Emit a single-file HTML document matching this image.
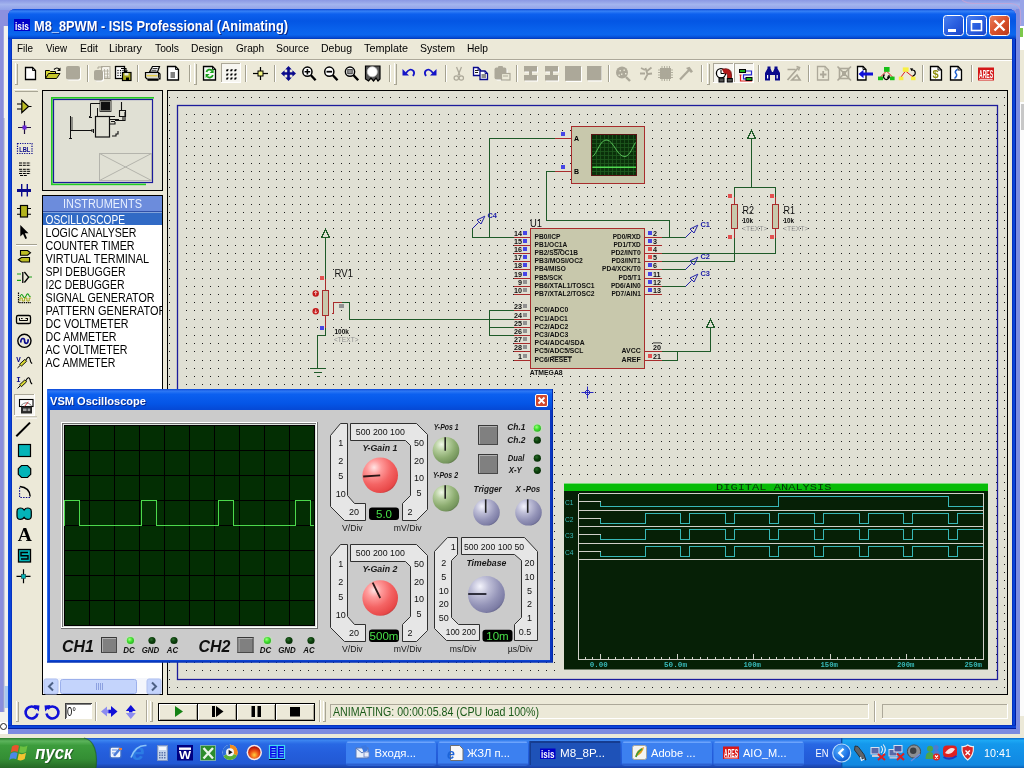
<!DOCTYPE html>
<html lang="en"><head><meta charset="utf-8"><title>M8_8PWM - ISIS Professional (Animating)</title>
<style>
html,body{margin:0;padding:0;background:#ECE9D8;overflow:hidden}
svg{display:block;font-family:'Liberation Sans',sans-serif;will-change:transform}
text{white-space:pre}
</style></head><body>
<svg width="1024" height="768" viewBox="0 0 1024 768">
<defs>
<linearGradient id="gTitle" x1="0" y1="0" x2="0" y2="1">
<stop offset="0" stop-color="#0A45D6"/><stop offset="0.07" stop-color="#3580F6"/><stop offset="0.17" stop-color="#0D60EE"/>
<stop offset="0.4" stop-color="#0456E4"/><stop offset="0.7" stop-color="#0962EC"/><stop offset="0.86" stop-color="#0B66EE"/><stop offset="0.94" stop-color="#0650D8"/><stop offset="1" stop-color="#0338B8"/>
</linearGradient>
<linearGradient id="gBtnB" x1="0" y1="0" x2="1" y2="1">
<stop offset="0" stop-color="#4C82F0"/><stop offset="0.5" stop-color="#2A5FE0"/><stop offset="1" stop-color="#1B44C8"/>
</linearGradient>
<linearGradient id="gBtnR" x1="0" y1="0" x2="1" y2="1">
<stop offset="0" stop-color="#E9825F"/><stop offset="0.5" stop-color="#D9512B"/><stop offset="1" stop-color="#B8381A"/>
</linearGradient>
<linearGradient id="gBack" x1="0" y1="0" x2="0" y2="1">
<stop offset="0" stop-color="#8A98E4"/><stop offset="0.45" stop-color="#A3B4EE"/><stop offset="1" stop-color="#8FA0E8"/>
</linearGradient>
</defs>
<rect x="0" y="0" width="1024" height="768" fill="#8C90DE"/>
<rect x="0" y="0" width="1024" height="10" fill="url(#gBack)"/>
<rect x="3.5" y="26" width="4.5" height="704" fill="#F2F2EE"/>
<rect x="0" y="26" width="3.5" height="686" fill="#8A8EDC"/>
<rect x="0" y="712" width="4" height="18" fill="#F2F2EE"/>
<rect x="3.4" y="118" width="1" height="594" fill="#9098C8"/>
<rect x="4.5" y="686" width="3.5" height="22" fill="#A8C8F0"/>
<rect x="1016" y="9" width="4" height="725" fill="#7C8CE2"/>
<rect x="1020" y="0" width="4" height="26" fill="#98A4E8"/>
<rect x="1020" y="26" width="4" height="24" fill="#FFFFFF"/>
<rect x="1020" y="28" width="3" height="9" fill="#7CC84C"/>
<rect x="1020" y="50" width="4" height="52" fill="#ECE9D8"/>
<rect x="1020" y="102" width="4" height="614" fill="#FBFBFB"/>
<rect x="1021" y="104" width="3" height="26" fill="#C8C8C8"/>
<rect x="1020" y="716" width="4" height="22" fill="#ECE9D8"/>
<path d="M962 0 Q966 3.5 976 3.5 H1011 Q1020.5 4 1020.5 13 V25" fill="none" stroke="#C4A4D4" stroke-width="1.2" opacity="0.8"/>
<rect x="0" y="729" width="1020" height="5" fill="#7C8AE0"/>
<rect x="0" y="734" width="1024" height="4" fill="#ECE9D8"/>
<rect x="0" y="722" width="8" height="12" fill="#FFFFFF"/>
<circle cx="3.5" cy="726.5" r="3" fill="#fff" stroke="#222" stroke-width="1"/>
<path d="M8 729 V17 Q8 9 16 9 H1008 Q1016 9 1016 17 V729 Z" fill="#0831D9"/>
<path d="M8 39 V17 Q8 9 16 9 H1008 Q1016 9 1016 17 V39 Z" fill="url(#gTitle)"/>
<rect x="8" y="39" width="1" height="690" fill="#0A4BDC"/>
<rect x="9" y="39" width="2" height="690" fill="#0A43D8"/>
<rect x="11" y="39" width="1" height="690" fill="#0632C0"/>
<rect x="1012" y="39" width="1" height="690" fill="#0632C0"/>
<rect x="1013" y="39" width="2" height="690" fill="#0A43D8"/>
<rect x="1015" y="39" width="1" height="690" fill="#001EA0"/>
<rect x="8" y="725" width="1008" height="1" fill="#0632C0"/>
<rect x="8" y="726" width="1008" height="2" fill="#0A43D8"/>
<rect x="8" y="728" width="1008" height="1" fill="#001EA0"/>
<rect x="12" y="39" width="1000" height="686" fill="#ECE9D8"/>
<rect x="14" y="19" width="16" height="12" fill="#0000C8"/>
<text x="15" y="29.5" font-size="11" fill="#fff" font-weight="bold" textLength="14" lengthAdjust="spacingAndGlyphs">isis</text>
<text x="35" y="32" font-size="13.8" fill="#0A2A8C" font-weight="bold" textLength="254" lengthAdjust="spacingAndGlyphs">M8_8PWM - ISIS Professional (Animating)</text>
<text x="34" y="31" font-size="13.8" fill="#fff" font-weight="bold" textLength="254" lengthAdjust="spacingAndGlyphs">M8_8PWM - ISIS Professional (Animating)</text>
<rect x="943.5" y="15.5" width="20" height="20" fill="url(#gBtnB)" stroke="#fff" stroke-width="1" rx="3"/>
<rect x="966.5" y="15.5" width="20" height="20" fill="url(#gBtnB)" stroke="#fff" stroke-width="1" rx="3"/>
<rect x="989.5" y="15.5" width="20" height="20" fill="url(#gBtnR)" stroke="#fff" stroke-width="1" rx="3"/>
<rect x="948" y="29" width="8" height="3" fill="#fff"/>
<rect x="971.5" y="21.5" width="10" height="9" fill="none" stroke="#fff" stroke-width="1.6"/>
<rect x="971" y="20" width="11" height="3" fill="#fff"/>
<path d="M994.5 20.5 L1004.5 30.5 M1004.5 20.5 L994.5 30.5" fill="none" stroke="#fff" stroke-width="2.4"/>
<text x="17" y="52" font-size="11" fill="#000" textLength="16" lengthAdjust="spacingAndGlyphs">File</text>
<text x="46" y="52" font-size="11" fill="#000" textLength="21" lengthAdjust="spacingAndGlyphs">View</text>
<text x="80" y="52" font-size="11" fill="#000" textLength="18" lengthAdjust="spacingAndGlyphs">Edit</text>
<text x="109" y="52" font-size="11" fill="#000" textLength="33" lengthAdjust="spacingAndGlyphs">Library</text>
<text x="155" y="52" font-size="11" fill="#000" textLength="24" lengthAdjust="spacingAndGlyphs">Tools</text>
<text x="191" y="52" font-size="11" fill="#000" textLength="32" lengthAdjust="spacingAndGlyphs">Design</text>
<text x="236" y="52" font-size="11" fill="#000" textLength="28" lengthAdjust="spacingAndGlyphs">Graph</text>
<text x="276" y="52" font-size="11" fill="#000" textLength="33" lengthAdjust="spacingAndGlyphs">Source</text>
<text x="321" y="52" font-size="11" fill="#000" textLength="31" lengthAdjust="spacingAndGlyphs">Debug</text>
<text x="364" y="52" font-size="11" fill="#000" textLength="44" lengthAdjust="spacingAndGlyphs">Template</text>
<text x="420" y="52" font-size="11" fill="#000" textLength="35" lengthAdjust="spacingAndGlyphs">System</text>
<text x="467" y="52" font-size="11" fill="#000" textLength="21" lengthAdjust="spacingAndGlyphs">Help</text>
<rect x="12" y="59" width="1000" height="1" fill="#ACA899"/>
<rect x="12" y="60" width="1000" height="1" fill="#fff"/>
<rect x="15" y="63" width="1" height="21" fill="#fff"/>
<rect x="16" y="63" width="1" height="21" fill="#E4E1D0"/>
<rect x="17" y="64" width="1" height="21" fill="#A8A594"/>
<rect x="15" y="84" width="3" height="1" fill="#A8A594"/>
<rect x="194" y="63" width="1" height="21" fill="#fff"/>
<rect x="195" y="63" width="1" height="21" fill="#E4E1D0"/>
<rect x="196" y="64" width="1" height="21" fill="#A8A594"/>
<rect x="194" y="84" width="3" height="1" fill="#A8A594"/>
<rect x="394" y="63" width="1" height="21" fill="#fff"/>
<rect x="395" y="63" width="1" height="21" fill="#E4E1D0"/>
<rect x="396" y="64" width="1" height="21" fill="#A8A594"/>
<rect x="394" y="84" width="3" height="1" fill="#A8A594"/>
<rect x="707" y="63" width="1" height="21" fill="#fff"/>
<rect x="708" y="63" width="1" height="21" fill="#E4E1D0"/>
<rect x="709" y="64" width="1" height="21" fill="#A8A594"/>
<rect x="707" y="84" width="3" height="1" fill="#A8A594"/>
<rect x="14" y="89" width="23" height="1" fill="#fff"/>
<rect x="14" y="90" width="23" height="1" fill="#E4E1D0"/>
<rect x="15" y="91" width="23" height="1" fill="#A8A594"/>
<rect x="42.5" y="90.5" width="120" height="100" fill="#E0E0D4" stroke="#000" stroke-width="1"/>
<rect x="51" y="97" width="103" height="1.6" fill="#22CC22"/>
<rect x="51" y="97" width="1.6" height="88" fill="#22CC22"/>
<rect x="51" y="183.6" width="95" height="1.6" fill="#22CC22"/>
<rect x="53.5" y="99.5" width="99" height="83" fill="none" stroke="#1A1A9C" stroke-width="1.2"/>
<rect x="99.5" y="153.5" width="52" height="27" fill="none" stroke="#B4B4AC" stroke-width="1"/>
<line x1="99.5" y1="153.5" x2="151.5" y2="180.5" stroke="#B4B4AC"/>
<line x1="151.5" y1="153.5" x2="99.5" y2="180.5" stroke="#B4B4AC"/>
<rect x="95.5" y="116.5" width="14" height="20.5" fill="none" stroke="#101010" stroke-width="1.2"/>
<rect x="101" y="101.5" width="9" height="9" fill="#101010"/>
<rect x="100" y="100.5" width="11" height="11" fill="none" stroke="#101010" stroke-width="0.8"/>
<path d="M100 103.5 H90.5 V116.5 H89 M97.5 108 V116 M89 117.5 h3" fill="none" stroke="#101010"/>
<path d="M70.5 116 V138 M69 138.5 h3 M70.5 121 v4 M71 130.5 H92 M92 129 v3 M93.5 129 v4" fill="none" stroke="#101010"/>
<path d="M72 117 v14" fill="none" stroke="#101010" stroke-width="0.8"/>
<path d="M110 116.5 h5 M110 119.5 h9 M111 121.5 h4 M110 124 h5 v-2 M115 120.5 H125 V112 M121.5 102 V110 M119.5 110.5 h6 v6 h-6 z M123 116 v4 M112 136 h4 v-2 h2 v-3" fill="none" stroke="#101010" stroke-width="1.1"/>
<rect x="42.5" y="195.5" width="120" height="499" fill="#fff" stroke="#000" stroke-width="1"/>
<rect x="43" y="196" width="119" height="16" fill="#6C8CDC"/>
<rect x="43" y="211" width="119" height="1.2" fill="#3050A8"/>
<text x="102.5" y="208" font-size="12" fill="#E8F0FF" text-anchor="middle" textLength="79" lengthAdjust="spacingAndGlyphs">INSTRUMENTS</text>
<rect x="43" y="212.5" width="119" height="12.5" fill="#316AC5"/>
<clipPath id="clipList"><rect x="43" y="196" width="119" height="480"/></clipPath><g clip-path="url(#clipList)">
<text x="45.5" y="223.6" font-size="12.4" fill="#fff" textLength="79.5" lengthAdjust="spacingAndGlyphs">OSCILLOSCOPE</text>
<text x="45.5" y="236.6" font-size="12.4" fill="#000" textLength="91" lengthAdjust="spacingAndGlyphs">LOGIC ANALYSER</text>
<text x="45.5" y="249.6" font-size="12.4" fill="#000" textLength="89" lengthAdjust="spacingAndGlyphs">COUNTER TIMER</text>
<text x="45.5" y="262.6" font-size="12.4" fill="#000" textLength="103.5" lengthAdjust="spacingAndGlyphs">VIRTUAL TERMINAL</text>
<text x="45.5" y="275.6" font-size="12.4" fill="#000" textLength="80" lengthAdjust="spacingAndGlyphs">SPI DEBUGGER</text>
<text x="45.5" y="288.6" font-size="12.4" fill="#000" textLength="79" lengthAdjust="spacingAndGlyphs">I2C DEBUGGER</text>
<text x="45.5" y="301.6" font-size="12.4" fill="#000" textLength="109" lengthAdjust="spacingAndGlyphs">SIGNAL GENERATOR</text>
<text x="45.5" y="314.6" font-size="12.4" fill="#000" textLength="121" lengthAdjust="spacingAndGlyphs">PATTERN GENERATOR</text>
<text x="45.5" y="327.6" font-size="12.4" fill="#000" textLength="83" lengthAdjust="spacingAndGlyphs">DC VOLTMETER</text>
<text x="45.5" y="340.6" font-size="12.4" fill="#000" textLength="71" lengthAdjust="spacingAndGlyphs">DC AMMETER</text>
<text x="45.5" y="353.6" font-size="12.4" fill="#000" textLength="82" lengthAdjust="spacingAndGlyphs">AC VOLTMETER</text>
<text x="45.5" y="366.6" font-size="12.4" fill="#000" textLength="70" lengthAdjust="spacingAndGlyphs">AC AMMETER</text>
</g>
<rect x="43" y="678" width="119" height="16" fill="#F4F6FC"/>
<rect x="44" y="679" width="14" height="15" fill="#C4D4FC" stroke="#B0C0F0" stroke-width="1" rx="2"/>
<rect x="147" y="679" width="14" height="15" fill="#C4D4FC" stroke="#B0C0F0" stroke-width="1" rx="2"/>
<rect x="60.5" y="679.5" width="76" height="14" fill="#C4D4FC" stroke="#9CB0EC" stroke-width="1" rx="2"/>
<path d="M53 682.5 L49 686.5 L53 690.5" fill="none" stroke="#4D6185" stroke-width="2"/>
<path d="M152 682.5 L156 686.5 L152 690.5" fill="none" stroke="#4D6185" stroke-width="2"/>
<rect x="96" y="683" width="1" height="7" fill="#8CA0E0"/>
<rect x="98" y="683" width="1" height="7" fill="#8CA0E0"/>
<rect x="100" y="683" width="1" height="7" fill="#8CA0E0"/>
<rect x="102" y="683" width="1" height="7" fill="#8CA0E0"/>
<rect x="167.5" y="90.5" width="840" height="604" fill="#E0E0D4" stroke="#000" stroke-width="1"/>
<defs><path id="dotrow" d="M169 0h1M177 0h1M186 0h1M194 0h1M202 0h1M210 0h1M218 0h1M227 0h1M235 0h1M243 0h1M251 0h1M259 0h1M268 0h1M276 0h1M284 0h1M292 0h1M300 0h1M308 0h1M317 0h1M325 0h1M333 0h1M341 0h1M349 0h1M358 0h1M366 0h1M374 0h1M382 0h1M390 0h1M399 0h1M407 0h1M415 0h1M423 0h1M431 0h1M439 0h1M448 0h1M456 0h1M464 0h1M472 0h1M480 0h1M489 0h1M497 0h1M505 0h1M513 0h1M521 0h1M530 0h1M538 0h1M546 0h1M554 0h1M562 0h1M570 0h1M579 0h1M587 0h1M595 0h1M603 0h1M611 0h1M620 0h1M628 0h1M636 0h1M644 0h1M652 0h1M661 0h1M669 0h1M677 0h1M685 0h1M693 0h1M702 0h1M710 0h1M718 0h1M726 0h1M734 0h1M742 0h1M751 0h1M759 0h1M767 0h1M775 0h1M783 0h1M792 0h1M800 0h1M808 0h1M816 0h1M824 0h1M833 0h1M841 0h1M849 0h1M857 0h1M865 0h1M873 0h1M882 0h1M890 0h1M898 0h1M906 0h1M914 0h1M923 0h1M931 0h1M939 0h1M947 0h1M955 0h1M964 0h1M972 0h1M980 0h1M988 0h1M996 0h1M1004 0h1" stroke="#1C1C1C" stroke-width="1" fill="none"/></defs>
<g shape-rendering="crispEdges">
<use href="#dotrow" y="97.5"/>
<use href="#dotrow" y="105.5"/>
<use href="#dotrow" y="114.5"/>
<use href="#dotrow" y="122.5"/>
<use href="#dotrow" y="130.5"/>
<use href="#dotrow" y="138.5"/>
<use href="#dotrow" y="146.5"/>
<use href="#dotrow" y="155.5"/>
<use href="#dotrow" y="163.5"/>
<use href="#dotrow" y="171.5"/>
<use href="#dotrow" y="179.5"/>
<use href="#dotrow" y="187.5"/>
<use href="#dotrow" y="196.5"/>
<use href="#dotrow" y="204.5"/>
<use href="#dotrow" y="212.5"/>
<use href="#dotrow" y="220.5"/>
<use href="#dotrow" y="228.5"/>
<use href="#dotrow" y="237.5"/>
<use href="#dotrow" y="245.5"/>
<use href="#dotrow" y="253.5"/>
<use href="#dotrow" y="261.5"/>
<use href="#dotrow" y="269.5"/>
<use href="#dotrow" y="278.5"/>
<use href="#dotrow" y="286.5"/>
<use href="#dotrow" y="294.5"/>
<use href="#dotrow" y="302.5"/>
<use href="#dotrow" y="310.5"/>
<use href="#dotrow" y="319.5"/>
<use href="#dotrow" y="327.5"/>
<use href="#dotrow" y="335.5"/>
<use href="#dotrow" y="343.5"/>
<use href="#dotrow" y="351.5"/>
<use href="#dotrow" y="360.5"/>
<use href="#dotrow" y="368.5"/>
<use href="#dotrow" y="376.5"/>
<use href="#dotrow" y="384.5"/>
<use href="#dotrow" y="392.5"/>
<use href="#dotrow" y="400.5"/>
<use href="#dotrow" y="408.5"/>
<use href="#dotrow" y="416.5"/>
<use href="#dotrow" y="425.5"/>
<use href="#dotrow" y="433.5"/>
<use href="#dotrow" y="441.5"/>
<use href="#dotrow" y="449.5"/>
<use href="#dotrow" y="457.5"/>
<use href="#dotrow" y="465.5"/>
<use href="#dotrow" y="474.5"/>
<use href="#dotrow" y="482.5"/>
<use href="#dotrow" y="490.5"/>
<use href="#dotrow" y="498.5"/>
<use href="#dotrow" y="506.5"/>
<use href="#dotrow" y="515.5"/>
<use href="#dotrow" y="523.5"/>
<use href="#dotrow" y="531.5"/>
<use href="#dotrow" y="539.5"/>
<use href="#dotrow" y="547.5"/>
<use href="#dotrow" y="556.5"/>
<use href="#dotrow" y="564.5"/>
<use href="#dotrow" y="572.5"/>
<use href="#dotrow" y="580.5"/>
<use href="#dotrow" y="588.5"/>
<use href="#dotrow" y="597.5"/>
<use href="#dotrow" y="605.5"/>
<use href="#dotrow" y="613.5"/>
<use href="#dotrow" y="621.5"/>
<use href="#dotrow" y="629.5"/>
<use href="#dotrow" y="638.5"/>
<use href="#dotrow" y="646.5"/>
<use href="#dotrow" y="654.5"/>
<use href="#dotrow" y="662.5"/>
<use href="#dotrow" y="670.5"/>
<use href="#dotrow" y="679.5"/>
<use href="#dotrow" y="687.5"/>
</g>
<rect x="177.5" y="105.5" width="820" height="574" fill="none" stroke="#1C1C9C" stroke-width="1.3"/>
<g shape-rendering="crispEdges" fill="none">
<path d="M554.5 138.5 H489.5 V237.5 M472.5 228.5 V237.5 H513.5" fill="none" stroke="#1E5A28"/>
<path d="M554.5 138.5 H570.5" fill="none" stroke="#A82C2C"/>
<path d="M554.5 171.5 H546.5 V220.5 H669.5 V237.5" fill="none" stroke="#1E5A28"/>
<path d="M554.5 171.5 H570.5" fill="none" stroke="#A82C2C"/>
<path d="M644.5 237.5 H661.5" fill="none" stroke="#A82C2C"/>
<path d="M644.5 245.5 H661.5" fill="none" stroke="#A82C2C"/>
<path d="M644.5 253.5 H661.5" fill="none" stroke="#A82C2C"/>
<path d="M644.5 261.5 H661.5" fill="none" stroke="#A82C2C"/>
<path d="M644.5 269.5 H661.5" fill="none" stroke="#A82C2C"/>
<path d="M644.5 278.5 H661.5" fill="none" stroke="#A82C2C"/>
<path d="M644.5 286.5 H661.5" fill="none" stroke="#A82C2C"/>
<path d="M644.5 294.5 H661.5" fill="none" stroke="#A82C2C"/>
<path d="M644.5 351.5 H661.5" fill="none" stroke="#A82C2C"/>
<path d="M644.5 360.5 H661.5" fill="none" stroke="#A82C2C"/>
<path d="M661.5 237.5 H685.5" fill="none" stroke="#1E5A28"/>
<path d="M661.5 253.5 H775.5 V228.5" fill="none" stroke="#1E5A28"/>
<path d="M661.5 261.5 H734.5 V228.5" fill="none" stroke="#1E5A28"/>
<path d="M661.5 269.5 H685.5" fill="none" stroke="#1E5A28"/>
<path d="M661.5 286.5 H685.5" fill="none" stroke="#1E5A28"/>
<path d="M734.5 204.5 V187.5 H775.5 V204.5 M751.5 187.5 V138.5" fill="none" stroke="#1E5A28"/>
<path d="M734.5 196.5 V204.5 M775.5 196.5 V204.5 M734.5 228.5 V237.5 M775.5 228.5 V237.5" fill="none" stroke="#A82C2C"/>
<path d="M751.5 130.5 L755.5 138.5 H747.5 Z" fill="none" stroke="#1E5A28"/>
<path d="M325.5 229.5 L329.5 237.5 H321.5 Z" fill="none" stroke="#1E5A28"/>
<path d="M710.5 319.5 L714.5 327.5 H706.5 Z" fill="none" stroke="#1E5A28"/>
<path d="M661.5 351.5 H710.5 V327.5 M661.5 360.5 H677.5 V351.5" fill="none" stroke="#1E5A28"/>
<path d="M513.5 237.5 H530.5" fill="none" stroke="#A82C2C"/>
<path d="M513.5 245.5 H530.5" fill="none" stroke="#A82C2C"/>
<path d="M513.5 253.5 H530.5" fill="none" stroke="#A82C2C"/>
<path d="M513.5 261.5 H530.5" fill="none" stroke="#A82C2C"/>
<path d="M513.5 269.5 H530.5" fill="none" stroke="#A82C2C"/>
<path d="M513.5 278.5 H530.5" fill="none" stroke="#A82C2C"/>
<path d="M513.5 286.5 H530.5" fill="none" stroke="#A82C2C"/>
<path d="M513.5 294.5 H530.5" fill="none" stroke="#A82C2C"/>
<path d="M513.5 310.5 H530.5" fill="none" stroke="#A82C2C"/>
<path d="M513.5 319.5 H530.5" fill="none" stroke="#A82C2C"/>
<path d="M513.5 327.5 H530.5" fill="none" stroke="#A82C2C"/>
<path d="M513.5 335.5 H530.5" fill="none" stroke="#A82C2C"/>
<path d="M513.5 343.5 H530.5" fill="none" stroke="#A82C2C"/>
<path d="M513.5 351.5 H530.5" fill="none" stroke="#A82C2C"/>
<path d="M513.5 360.5 H530.5" fill="none" stroke="#A82C2C"/>
<path d="M513.5 310.5 H489.5 V335.5 H513.5 M489.5 327.5 H513.5 M513.5 319.5 H349.5 V302.5 H341.5" fill="none" stroke="#1E5A28"/>
<path d="M341.5 302.5 H333.5 V313.5 h-2" fill="none" stroke="#A82C2C"/>
<path d="M325.5 237.5 V278.5 M325.5 327.5 V335.5 H317.5 V368.5" fill="none" stroke="#1E5A28"/>
<path d="M325.5 278.5 V290.5 M325.5 315.5 V327.5" fill="none" stroke="#A82C2C"/>
<path d="M309.5 368.5 h16 M313.5 372.5 h8 M316.5 376.5 h3" fill="none" stroke="#1E5A28"/>
</g>
<g shape-rendering="crispEdges">
<rect x="322.5" y="290.5" width="6" height="25" fill="#C8C8AC" stroke="#A82C2C" stroke-width="1"/>
<rect x="731.5" y="204.5" width="6" height="24" fill="#C8C8AC" stroke="#A82C2C" stroke-width="1"/>
<rect x="772.5" y="204.5" width="6" height="24" fill="#C8C8AC" stroke="#A82C2C" stroke-width="1"/>
<rect x="530.5" y="228.5" width="114" height="140" fill="#C8C8AC" stroke="#A82C2C" stroke-width="1"/>
<rect x="571.5" y="126.5" width="73" height="57" fill="#C8C8AC" stroke="#A82C2C" stroke-width="1"/>
<rect x="591.5" y="134.5" width="45" height="41" fill="#0A300A" stroke="#5A1414" stroke-width="1"/>
<path d="M596.1 135V175M600.2 135V175M604.3 135V175M608.4 135V175M612.5 135V175M616.6 135V175M620.7 135V175M624.8 135V175M628.9 135V175M633.0 135V175M592 139.1H636M592 143.2H636M592 147.3H636M592 151.4H636M592 155.5H636M592 159.6H636M592 163.7H636M592 167.8H636M592 171.9H636" fill="none" stroke="#1E5A1E" stroke-width="0.8"/>
</g>
<path d="M592.5 156.5 C597 154 600 139 607 140 C614 141 617 157 625 156.5 C630 156 633 146 635.5 142.5" fill="none" stroke="#58C058"/>
<line x1="592.5" y1="167.3" x2="636" y2="167.3" stroke="#50D850" stroke-width="1.4"/>
<text x="574" y="140.5" font-size="7" fill="#000" font-weight="bold">A</text>
<text x="574" y="173.5" font-size="7" fill="#000" font-weight="bold">B</text>
<rect x="561" y="132" width="4" height="4" fill="#4646E6"/>
<rect x="561" y="165" width="4" height="4" fill="#4646E6"/>
<rect x="523" y="231" width="4" height="4" fill="#4646E6"/>
<rect x="523" y="239" width="4" height="4" fill="#4646E6"/>
<rect x="523" y="247" width="4" height="4" fill="#4646E6"/>
<rect x="523" y="255" width="4" height="4" fill="#4646E6"/>
<rect x="523" y="263" width="4" height="4" fill="#4646E6"/>
<rect x="523" y="272" width="4" height="4" fill="#4646E6"/>
<rect x="523" y="280" width="4" height="4" fill="#909090"/>
<rect x="523" y="288" width="4" height="4" fill="#909090"/>
<rect x="523" y="304" width="4" height="4" fill="#909090"/>
<rect x="523" y="313" width="4" height="4" fill="#909090"/>
<rect x="523" y="321" width="4" height="4" fill="#909090"/>
<rect x="523" y="329" width="4" height="4" fill="#909090"/>
<rect x="523" y="337" width="4" height="4" fill="#909090"/>
<rect x="523" y="345" width="4" height="4" fill="#909090"/>
<rect x="523" y="354" width="4" height="4" fill="#909090"/>
<rect x="648" y="231" width="4" height="4" fill="#4646E6"/>
<rect x="648" y="239" width="4" height="4" fill="#4646E6"/>
<rect x="648" y="247" width="4" height="4" fill="#E45050"/>
<rect x="648" y="255" width="4" height="4" fill="#E45050"/>
<rect x="648" y="263" width="4" height="4" fill="#4646E6"/>
<rect x="648" y="272" width="4" height="4" fill="#4646E6"/>
<rect x="648" y="280" width="4" height="4" fill="#4646E6"/>
<rect x="648" y="288" width="4" height="4" fill="#4646E6"/>
<rect x="648" y="354" width="4" height="4" fill="#E45050"/>
<rect x="728" y="194" width="4" height="4" fill="#E45050"/>
<rect x="770" y="194" width="4" height="4" fill="#E45050"/>
<rect x="728" y="235" width="4" height="4" fill="#E45050"/>
<rect x="770" y="235" width="4" height="4" fill="#E45050"/>
<rect x="320" y="276" width="4" height="4" fill="#E45050"/>
<rect x="320" y="326" width="4" height="4" fill="#4646E6"/>
<rect x="339" y="304" width="5" height="4" fill="#909090"/>
<circle cx="315.7" cy="293.5" r="3.2" fill="#C41818"/>
<circle cx="315.7" cy="311.2" r="3.2" fill="#C41818"/>
<path d="M315.7 291.6 v3.6 M314.2 293 l1.5 -1.6 l1.5 1.6" fill="none" stroke="#fff" stroke-width="0.7"/>
<path d="M315.7 309.4 v3.6 M314.2 311.6 l1.5 1.6 l1.5 -1.6" fill="none" stroke="#fff" stroke-width="0.7"/>
<text x="522" y="235.5" font-size="7.2" fill="#101010" font-weight="bold" text-anchor="end">14</text>
<text x="522" y="243.5" font-size="7.2" fill="#101010" font-weight="bold" text-anchor="end">15</text>
<text x="522" y="251.5" font-size="7.2" fill="#101010" font-weight="bold" text-anchor="end">16</text>
<text x="522" y="259.5" font-size="7.2" fill="#101010" font-weight="bold" text-anchor="end">17</text>
<text x="522" y="267.5" font-size="7.2" fill="#101010" font-weight="bold" text-anchor="end">18</text>
<text x="522" y="276.5" font-size="7.2" fill="#101010" font-weight="bold" text-anchor="end">19</text>
<text x="522" y="284.5" font-size="7.2" fill="#101010" font-weight="bold" text-anchor="end">9</text>
<text x="522" y="292.5" font-size="7.2" fill="#101010" font-weight="bold" text-anchor="end">10</text>
<text x="522" y="308.5" font-size="7.2" fill="#101010" font-weight="bold" text-anchor="end">23</text>
<text x="522" y="317.5" font-size="7.2" fill="#101010" font-weight="bold" text-anchor="end">24</text>
<text x="522" y="325.5" font-size="7.2" fill="#101010" font-weight="bold" text-anchor="end">25</text>
<text x="522" y="333.5" font-size="7.2" fill="#101010" font-weight="bold" text-anchor="end">26</text>
<text x="522" y="341.5" font-size="7.2" fill="#101010" font-weight="bold" text-anchor="end">27</text>
<text x="522" y="349.5" font-size="7.2" fill="#101010" font-weight="bold" text-anchor="end">28</text>
<text x="522" y="358.5" font-size="7.2" fill="#101010" font-weight="bold" text-anchor="end">1</text>
<text x="653" y="235.5" font-size="7.2" fill="#101010" font-weight="bold">2</text>
<text x="653" y="243.5" font-size="7.2" fill="#101010" font-weight="bold">3</text>
<text x="653" y="251.5" font-size="7.2" fill="#101010" font-weight="bold">4</text>
<text x="653" y="259.5" font-size="7.2" fill="#101010" font-weight="bold">5</text>
<text x="653" y="267.5" font-size="7.2" fill="#101010" font-weight="bold">6</text>
<text x="653" y="276.5" font-size="7.2" fill="#101010" font-weight="bold">11</text>
<text x="653" y="284.5" font-size="7.2" fill="#101010" font-weight="bold">12</text>
<text x="653" y="292.5" font-size="7.2" fill="#101010" font-weight="bold">13</text>
<text x="653" y="349.5" font-size="7.2" fill="#101010" font-weight="bold">20</text>
<text x="653" y="358.5" font-size="7.2" fill="#101010" font-weight="bold">21</text>
<text x="534.6" y="239.1" font-size="6.6" fill="#101010" font-weight="bold" textLength="25.8" lengthAdjust="spacingAndGlyphs">PB0/ICP</text>
<text x="534.6" y="247.1" font-size="6.6" fill="#101010" font-weight="bold" textLength="32.6" lengthAdjust="spacingAndGlyphs">PB1/OC1A</text>
<text x="534.6" y="255.1" font-size="6.6" fill="#101010" font-weight="bold" textLength="43.4" lengthAdjust="spacingAndGlyphs">PB2/SS/OC1B</text>
<text x="534.6" y="263.1" font-size="6.6" fill="#101010" font-weight="bold" textLength="48.2" lengthAdjust="spacingAndGlyphs">PB3/MOSI/OC2</text>
<text x="534.6" y="271.1" font-size="6.6" fill="#101010" font-weight="bold" textLength="31.2" lengthAdjust="spacingAndGlyphs">PB4/MISO</text>
<text x="534.6" y="280.1" font-size="6.6" fill="#101010" font-weight="bold" textLength="28.1" lengthAdjust="spacingAndGlyphs">PB5/SCK</text>
<text x="534.6" y="288.1" font-size="6.6" fill="#101010" font-weight="bold" textLength="60" lengthAdjust="spacingAndGlyphs">PB6/XTAL1/TOSC1</text>
<text x="534.6" y="296.1" font-size="6.6" fill="#101010" font-weight="bold" textLength="60" lengthAdjust="spacingAndGlyphs">PB7/XTAL2/TOSC2</text>
<text x="534.6" y="312.1" font-size="6.6" fill="#101010" font-weight="bold" textLength="33.6" lengthAdjust="spacingAndGlyphs">PC0/ADC0</text>
<text x="534.6" y="321.1" font-size="6.6" fill="#101010" font-weight="bold" textLength="33.1" lengthAdjust="spacingAndGlyphs">PC1/ADC1</text>
<text x="534.6" y="329.1" font-size="6.6" fill="#101010" font-weight="bold" textLength="33.6" lengthAdjust="spacingAndGlyphs">PC2/ADC2</text>
<text x="534.6" y="337.1" font-size="6.6" fill="#101010" font-weight="bold" textLength="33.6" lengthAdjust="spacingAndGlyphs">PC3/ADC3</text>
<text x="534.6" y="345.1" font-size="6.6" fill="#101010" font-weight="bold" textLength="50" lengthAdjust="spacingAndGlyphs">PC4/ADC4/SDA</text>
<text x="534.6" y="353.1" font-size="6.6" fill="#101010" font-weight="bold" textLength="48.7" lengthAdjust="spacingAndGlyphs">PC5/ADC5/SCL</text>
<text x="534.6" y="362.1" font-size="6.6" fill="#101010" font-weight="bold" textLength="37.2" lengthAdjust="spacingAndGlyphs">PC6/RESET</text>
<text x="612.6999999999999" y="239.1" font-size="6.6" fill="#101010" font-weight="bold" textLength="28.1" lengthAdjust="spacingAndGlyphs">PD0/RXD</text>
<text x="613.5" y="247.1" font-size="6.6" fill="#101010" font-weight="bold" textLength="27.3" lengthAdjust="spacingAndGlyphs">PD1/TXD</text>
<text x="610.9" y="255.1" font-size="6.6" fill="#101010" font-weight="bold" textLength="29.9" lengthAdjust="spacingAndGlyphs">PD2/INT0</text>
<text x="611.5" y="263.1" font-size="6.6" fill="#101010" font-weight="bold" textLength="29.3" lengthAdjust="spacingAndGlyphs">PD3/INT1</text>
<text x="602.0999999999999" y="271.1" font-size="6.6" fill="#101010" font-weight="bold" textLength="38.7" lengthAdjust="spacingAndGlyphs">PD4/XCK/T0</text>
<text x="618.5" y="280.1" font-size="6.6" fill="#101010" font-weight="bold" textLength="22.3" lengthAdjust="spacingAndGlyphs">PD5/T1</text>
<text x="610.9" y="288.1" font-size="6.6" fill="#101010" font-weight="bold" textLength="29.9" lengthAdjust="spacingAndGlyphs">PD6/AIN0</text>
<text x="611.5" y="296.1" font-size="6.6" fill="#101010" font-weight="bold" textLength="29.3" lengthAdjust="spacingAndGlyphs">PD7/AIN1</text>
<text x="621.5999999999999" y="353.1" font-size="6.6" fill="#101010" font-weight="bold" textLength="19.2" lengthAdjust="spacingAndGlyphs">AVCC</text>
<text x="621.5999999999999" y="362.1" font-size="6.6" fill="#101010" font-weight="bold" textLength="19.2" lengthAdjust="spacingAndGlyphs">AREF</text>
<line x1="553.5" y1="249.6" x2="562.5" y2="249.6" stroke="#101010" stroke-width="0.8"/>
<line x1="551.5" y1="356.6" x2="572" y2="356.6" stroke="#101010" stroke-width="0.8"/>
<line x1="653" y1="342.9" x2="661" y2="342.9" stroke="#101010" stroke-width="0.8"/>
<text x="530" y="227" font-size="11.5" fill="#101010" textLength="12" lengthAdjust="spacingAndGlyphs">U1</text>
<text x="529.7" y="374.5" font-size="6.6" fill="#101010" font-weight="bold" textLength="33" lengthAdjust="spacingAndGlyphs">ATMEGA8</text>
<text x="334.5" y="276.5" font-size="11" fill="#101010" textLength="18.5" lengthAdjust="spacingAndGlyphs">RV1</text>
<text x="334.5" y="334" font-size="6.6" fill="#101010" font-weight="bold" textLength="14.5" lengthAdjust="spacingAndGlyphs">100k</text>
<text x="334" y="342" font-size="6.6" fill="#909090" textLength="24.5" lengthAdjust="spacingAndGlyphs">&lt;TEXT&gt;</text>
<text x="742.5" y="213.5" font-size="11" fill="#101010" textLength="11.5" lengthAdjust="spacingAndGlyphs">R2</text>
<text x="742.5" y="222.5" font-size="6.6" fill="#101010" font-weight="bold" textLength="10.5" lengthAdjust="spacingAndGlyphs">10k</text>
<text x="742.0" y="230.5" font-size="6.6" fill="#909090" textLength="25.5" lengthAdjust="spacingAndGlyphs">&lt;TEXT&gt;</text>
<text x="783.5" y="213.5" font-size="11" fill="#101010" textLength="11.5" lengthAdjust="spacingAndGlyphs">R1</text>
<text x="783.5" y="222.5" font-size="6.6" fill="#101010" font-weight="bold" textLength="10.5" lengthAdjust="spacingAndGlyphs">10k</text>
<text x="783.0" y="230.5" font-size="6.6" fill="#909090" textLength="25.5" lengthAdjust="spacingAndGlyphs">&lt;TEXT&gt;</text>
<path d="M685.5 237.5 L691.5 231.5" fill="none" stroke="#2020A8"/>
<path d="M690.0 229.0 L697.8 225.2 L694.0 233.0 Z" fill="none" stroke="#2020A8"/>
<text x="700.5" y="227.0" font-size="7" fill="#2020A8" font-weight="bold" textLength="9.5" lengthAdjust="spacingAndGlyphs">C1</text>
<path d="M685.5 269.5 L691.5 263.5" fill="none" stroke="#2020A8"/>
<path d="M690.0 261.0 L697.8 257.2 L694.0 265.0 Z" fill="none" stroke="#2020A8"/>
<text x="700.5" y="259.0" font-size="7" fill="#2020A8" font-weight="bold" textLength="9.5" lengthAdjust="spacingAndGlyphs">C2</text>
<path d="M685.5 286.5 L691.5 280.5" fill="none" stroke="#2020A8"/>
<path d="M690.0 278.0 L697.8 274.2 L694.0 282.0 Z" fill="none" stroke="#2020A8"/>
<text x="700.5" y="276.0" font-size="7" fill="#2020A8" font-weight="bold" textLength="9.5" lengthAdjust="spacingAndGlyphs">C3</text>
<path d="M472.5 228.5 L478.5 222.5" fill="none" stroke="#2020A8"/>
<path d="M477.0 220.0 L484.8 216.2 L481.0 224.0 Z" fill="none" stroke="#2020A8"/>
<text x="487.5" y="218.0" font-size="7" fill="#2020A8" font-weight="bold" textLength="9.5" lengthAdjust="spacingAndGlyphs">C4</text>
<path d="M581.5 392.5 h12 M587.5 386.5 v12" fill="none" stroke="#2828C0"/>
<path d="M587.5 389.5 l3 3 l-3 3 l-3 -3 z" fill="none" stroke="#2828C0"/>
<rect x="562" y="482" width="428" height="190" fill="#E0E0D4"/>
<rect x="564" y="483" width="424" height="186.5" fill="#062006"/>
<rect x="564" y="483" width="424" height="8" fill="#08BC08"/>
<rect x="564" y="483" width="424" height="1" fill="#7CDC7C"/>
<text x="716" y="490.3" font-size="8.2" fill="#083008" textLength="115.5" lengthAdjust="spacingAndGlyphs" font-family="'Liberation Mono',monospace">DIGITAL ANALYSIS</text>
<g shape-rendering="crispEdges" fill="none">
<path d="M578.5 493.5 H983.5 V659.5 M578.5 493.5 V659.5 H983.5 M578.5 510.5 H983.5 M578.5 526.5 H983.5 M578.5 543.5 H983.5 M578.5 559.5 H983.5" fill="none" stroke="#D0D0C8"/>
<path d="M585.5 659V657M592.5 659V657M600.5 659V654M608.5 659V657M615.5 659V657M623.5 659V657M631.5 659V657M638.5 659V657M646.5 659V657M654.5 659V657M661.5 659V657M669.5 659V657M677.5 659V654M684.5 659V657M692.5 659V657M700.5 659V657M707.5 659V657M715.5 659V657M723.5 659V657M730.5 659V657M738.5 659V657M746.5 659V657M753.5 659V654M761.5 659V657M769.5 659V657M776.5 659V657M784.5 659V657M792.5 659V657M799.5 659V657M807.5 659V657M814.5 659V657M822.5 659V657M830.5 659V654M837.5 659V657M845.5 659V657M853.5 659V657M860.5 659V657M868.5 659V657M876.5 659V657M883.5 659V657M891.5 659V657M899.5 659V657M906.5 659V654M914.5 659V657M922.5 659V657M929.5 659V657M937.5 659V657M945.5 659V657M952.5 659V657M960.5 659V657M968.5 659V657M975.5 659V657M983.5 659V654" fill="none" stroke="#D0D0C8"/>
<path d="M579 501.5 H600.5" fill="none" stroke="#D0D0C8"/>
<path d="M600.5 501.5 V506.5 H778.5 V496.5 H948.5 V506.5 H983" fill="none" stroke="#38B8B8"/>
<path d="M579 518.5 H600.5" fill="none" stroke="#D0D0C8"/>
<path d="M600.5 518.5 V523.5 H645.5 V513.5 H680.5 V523.5 H689.5 V513.5 H725.5 V523.5 H734.5 V513.5 H769.5 V523.5 H778.5 V513.5 H814.5 V523.5 H823.5 V513.5 H859.5 V523.5 H868.5 V513.5 H903.5 V523.5 H912.5 V513.5 H948.5 V523.5 H957.5 V513.5 H983" fill="none" stroke="#38B8B8"/>
<path d="M579 534.5 H600.5" fill="none" stroke="#D0D0C8"/>
<path d="M600.5 534.5 V539.5 H645.5 V529.5 H680.5 V539.5 H689.5 V529.5 H725.5 V539.5 H734.5 V529.5 H769.5 V539.5 H778.5 V529.5 H814.5 V539.5 H823.5 V529.5 H859.5 V539.5 H868.5 V529.5 H903.5 V539.5 H912.5 V529.5 H948.5 V539.5 H957.5 V529.5 H983" fill="none" stroke="#38B8B8"/>
<path d="M579 551.5 H600.5" fill="none" stroke="#D0D0C8"/>
<path d="M600.5 551.5 V556.5 H645.5 V546.5 H680.5 V556.5 H689.5 V546.5 H725.5 V556.5 H734.5 V546.5 H769.5 V556.5 H778.5 V546.5 H814.5 V556.5 H823.5 V546.5 H859.5 V556.5 H868.5 V546.5 H903.5 V556.5 H912.5 V546.5 H948.5 V556.5 H957.5 V546.5 H983" fill="none" stroke="#38B8B8"/>
</g>
<text x="565" y="504.5" font-size="7" fill="#38B8B8" textLength="8.5" lengthAdjust="spacingAndGlyphs">C1</text>
<text x="565" y="521.5" font-size="7" fill="#38B8B8" textLength="8.5" lengthAdjust="spacingAndGlyphs">C2</text>
<text x="565" y="537.5" font-size="7" fill="#38B8B8" textLength="8.5" lengthAdjust="spacingAndGlyphs">C3</text>
<text x="565" y="554.5" font-size="7" fill="#38B8B8" textLength="8.5" lengthAdjust="spacingAndGlyphs">C4</text>
<text x="589.8" y="667.3" font-size="6.5" fill="#38B8B8" font-weight="bold" textLength="18" lengthAdjust="spacingAndGlyphs" font-family="'Liberation Mono',monospace">0.00</text>
<text x="664" y="667.3" font-size="6.5" fill="#38B8B8" font-weight="bold" textLength="23" lengthAdjust="spacingAndGlyphs" font-family="'Liberation Mono',monospace">50.0m</text>
<text x="743.5" y="667.3" font-size="6.5" fill="#38B8B8" font-weight="bold" textLength="17.5" lengthAdjust="spacingAndGlyphs" font-family="'Liberation Mono',monospace">100m</text>
<text x="820.5" y="667.3" font-size="6.5" fill="#38B8B8" font-weight="bold" textLength="17.5" lengthAdjust="spacingAndGlyphs" font-family="'Liberation Mono',monospace">150m</text>
<text x="897" y="667.3" font-size="6.5" fill="#38B8B8" font-weight="bold" textLength="17.5" lengthAdjust="spacingAndGlyphs" font-family="'Liberation Mono',monospace">200m</text>
<text x="964.5" y="667.3" font-size="6.5" fill="#38B8B8" font-weight="bold" textLength="17.5" lengthAdjust="spacingAndGlyphs" font-family="'Liberation Mono',monospace">250m</text>
<defs>
<linearGradient id="gCap2" x1="0" y1="0" x2="0" y2="1">
<stop offset="0" stop-color="#0A45D6"/><stop offset="0.1" stop-color="#2E78F4"/><stop offset="0.25" stop-color="#0C60F0"/>
<stop offset="0.7" stop-color="#0455E6"/><stop offset="1" stop-color="#0548D4"/>
</linearGradient>
<radialGradient id="kRed" cx="0.33" cy="0.28" r="0.8">
<stop offset="0" stop-color="#FFE4E4"/><stop offset="0.25" stop-color="#FF9C9C"/><stop offset="0.6" stop-color="#F46464"/><stop offset="0.9" stop-color="#E84848"/><stop offset="1" stop-color="#B43838"/>
</radialGradient>
<radialGradient id="kBlue" cx="0.33" cy="0.28" r="0.8">
<stop offset="0" stop-color="#F4F4FC"/><stop offset="0.3" stop-color="#C0C0D8"/><stop offset="0.65" stop-color="#9494B8"/><stop offset="0.9" stop-color="#7C7CA4"/><stop offset="1" stop-color="#5C5C80"/>
</radialGradient>
<radialGradient id="kGreen" cx="0.33" cy="0.28" r="0.8">
<stop offset="0" stop-color="#F0F8E8"/><stop offset="0.3" stop-color="#B8D0A0"/><stop offset="0.65" stop-color="#8CAC70"/><stop offset="0.9" stop-color="#74945C"/><stop offset="1" stop-color="#546C40"/>
</radialGradient>
<radialGradient id="ledOn" cx="0.4" cy="0.35" r="0.7"><stop offset="0" stop-color="#A0FF80"/><stop offset="0.5" stop-color="#40E030"/><stop offset="1" stop-color="#28B020"/></radialGradient>
<radialGradient id="ledOff" cx="0.4" cy="0.35" r="0.7"><stop offset="0" stop-color="#2C6C2C"/><stop offset="0.5" stop-color="#0C400C"/><stop offset="1" stop-color="#062C06"/></radialGradient>
</defs>
<rect x="47" y="389" width="506" height="273.5" fill="#0C44D4"/>
<rect x="550" y="410" width="3" height="252" fill="#0A36C0"/>
<rect x="47" y="389" width="506" height="21" fill="url(#gCap2)"/>
<rect x="47" y="389" width="1" height="273" fill="#2A6CF0"/>
<rect x="552" y="389" width="1" height="273" fill="#052CA8"/>
<rect x="47" y="661.5" width="506" height="1" fill="#052CA8"/>
<rect x="50" y="410" width="500" height="250" fill="#CBCBCB"/>
<text x="51" y="405.5" font-size="11" fill="#0A2A8C" font-weight="bold" textLength="96" lengthAdjust="spacingAndGlyphs">VSM Oscilloscope</text>
<text x="50" y="404.5" font-size="11" fill="#fff" font-weight="bold" textLength="96" lengthAdjust="spacingAndGlyphs">VSM Oscilloscope</text>
<rect x="535.5" y="394.5" width="12" height="12" fill="#D0482C" stroke="#fff" stroke-width="1" rx="1.5"/>
<path d="M538.5 397.5 l6 6 m0 -6 l-6 6" fill="none" stroke="#fff" stroke-width="1.8"/>
<rect x="61" y="422" width="257" height="207" fill="#707070"/>
<rect x="61" y="422" width="256" height="206" fill="#fff"/>
<rect x="62" y="423" width="254" height="204" fill="#707070"/>
<rect x="63" y="424" width="253" height="203" fill="#DCE2DC"/>
<rect x="64" y="425" width="251" height="201" fill="#000"/>
<g shape-rendering="crispEdges">
<rect x="65" y="426" width="24" height="24" fill="#032E03"/>
<rect x="65" y="451" width="24" height="24" fill="#032E03"/>
<rect x="65" y="476" width="24" height="24" fill="#032E03"/>
<rect x="65" y="501" width="24" height="24" fill="#032E03"/>
<rect x="65" y="526" width="24" height="24" fill="#032E03"/>
<rect x="65" y="551" width="24" height="24" fill="#032E03"/>
<rect x="65" y="576" width="24" height="24" fill="#032E03"/>
<rect x="65" y="601" width="24" height="24" fill="#032E03"/>
<rect x="90" y="426" width="24" height="24" fill="#032E03"/>
<rect x="90" y="451" width="24" height="24" fill="#032E03"/>
<rect x="90" y="476" width="24" height="24" fill="#032E03"/>
<rect x="90" y="501" width="24" height="24" fill="#032E03"/>
<rect x="90" y="526" width="24" height="24" fill="#032E03"/>
<rect x="90" y="551" width="24" height="24" fill="#032E03"/>
<rect x="90" y="576" width="24" height="24" fill="#032E03"/>
<rect x="90" y="601" width="24" height="24" fill="#032E03"/>
<rect x="115" y="426" width="24" height="24" fill="#032E03"/>
<rect x="115" y="451" width="24" height="24" fill="#032E03"/>
<rect x="115" y="476" width="24" height="24" fill="#032E03"/>
<rect x="115" y="501" width="24" height="24" fill="#032E03"/>
<rect x="115" y="526" width="24" height="24" fill="#032E03"/>
<rect x="115" y="551" width="24" height="24" fill="#032E03"/>
<rect x="115" y="576" width="24" height="24" fill="#032E03"/>
<rect x="115" y="601" width="24" height="24" fill="#032E03"/>
<rect x="140" y="426" width="24" height="24" fill="#032E03"/>
<rect x="140" y="451" width="24" height="24" fill="#032E03"/>
<rect x="140" y="476" width="24" height="24" fill="#032E03"/>
<rect x="140" y="501" width="24" height="24" fill="#032E03"/>
<rect x="140" y="526" width="24" height="24" fill="#032E03"/>
<rect x="140" y="551" width="24" height="24" fill="#032E03"/>
<rect x="140" y="576" width="24" height="24" fill="#032E03"/>
<rect x="140" y="601" width="24" height="24" fill="#032E03"/>
<rect x="165" y="426" width="24" height="24" fill="#032E03"/>
<rect x="165" y="451" width="24" height="24" fill="#032E03"/>
<rect x="165" y="476" width="24" height="24" fill="#032E03"/>
<rect x="165" y="501" width="24" height="24" fill="#032E03"/>
<rect x="165" y="526" width="24" height="24" fill="#032E03"/>
<rect x="165" y="551" width="24" height="24" fill="#032E03"/>
<rect x="165" y="576" width="24" height="24" fill="#032E03"/>
<rect x="165" y="601" width="24" height="24" fill="#032E03"/>
<rect x="190" y="426" width="24" height="24" fill="#032E03"/>
<rect x="190" y="451" width="24" height="24" fill="#032E03"/>
<rect x="190" y="476" width="24" height="24" fill="#032E03"/>
<rect x="190" y="501" width="24" height="24" fill="#032E03"/>
<rect x="190" y="526" width="24" height="24" fill="#032E03"/>
<rect x="190" y="551" width="24" height="24" fill="#032E03"/>
<rect x="190" y="576" width="24" height="24" fill="#032E03"/>
<rect x="190" y="601" width="24" height="24" fill="#032E03"/>
<rect x="215" y="426" width="24" height="24" fill="#032E03"/>
<rect x="215" y="451" width="24" height="24" fill="#032E03"/>
<rect x="215" y="476" width="24" height="24" fill="#032E03"/>
<rect x="215" y="501" width="24" height="24" fill="#032E03"/>
<rect x="215" y="526" width="24" height="24" fill="#032E03"/>
<rect x="215" y="551" width="24" height="24" fill="#032E03"/>
<rect x="215" y="576" width="24" height="24" fill="#032E03"/>
<rect x="215" y="601" width="24" height="24" fill="#032E03"/>
<rect x="240" y="426" width="24" height="24" fill="#032E03"/>
<rect x="240" y="451" width="24" height="24" fill="#032E03"/>
<rect x="240" y="476" width="24" height="24" fill="#032E03"/>
<rect x="240" y="501" width="24" height="24" fill="#032E03"/>
<rect x="240" y="526" width="24" height="24" fill="#032E03"/>
<rect x="240" y="551" width="24" height="24" fill="#032E03"/>
<rect x="240" y="576" width="24" height="24" fill="#032E03"/>
<rect x="240" y="601" width="24" height="24" fill="#032E03"/>
<rect x="265" y="426" width="24" height="24" fill="#032E03"/>
<rect x="265" y="451" width="24" height="24" fill="#032E03"/>
<rect x="265" y="476" width="24" height="24" fill="#032E03"/>
<rect x="265" y="501" width="24" height="24" fill="#032E03"/>
<rect x="265" y="526" width="24" height="24" fill="#032E03"/>
<rect x="265" y="551" width="24" height="24" fill="#032E03"/>
<rect x="265" y="576" width="24" height="24" fill="#032E03"/>
<rect x="265" y="601" width="24" height="24" fill="#032E03"/>
<rect x="290" y="426" width="24" height="24" fill="#032E03"/>
<rect x="290" y="451" width="24" height="24" fill="#032E03"/>
<rect x="290" y="476" width="24" height="24" fill="#032E03"/>
<rect x="290" y="501" width="24" height="24" fill="#032E03"/>
<rect x="290" y="526" width="24" height="24" fill="#032E03"/>
<rect x="290" y="551" width="24" height="24" fill="#032E03"/>
<rect x="290" y="576" width="24" height="24" fill="#032E03"/>
<rect x="290" y="601" width="24" height="24" fill="#032E03"/>
<path d="M64.5 525.5 V500.5 H79.5 V525.5 H141.5 V500.5 H156.5 V525.5 H218.5 V500.5 H233.5 V525.5 H295.5 V500.5 H310.5 V525.5 H314" fill="none" stroke="#4CD84C"/>
</g>
<text x="62" y="651.5" font-size="16.3" fill="#101010" font-weight="bold" font-style="italic" textLength="32" lengthAdjust="spacingAndGlyphs">CH1</text>
<rect x="101" y="637" width="16" height="16" fill="#808080"/>
<rect x="101" y="637" width="16" height="1" fill="#383838"/>
<rect x="101" y="637" width="1" height="16" fill="#383838"/>
<rect x="101" y="652" width="16" height="1" fill="#484848"/>
<rect x="116" y="637" width="1" height="16" fill="#484848"/>
<rect x="102" y="638" width="14" height="1" fill="#B0B0B0"/>
<rect x="102" y="638" width="1" height="14" fill="#B0B0B0"/>
<circle cx="130.4" cy="640.5" r="3.6" fill="url(#ledOn)"/>
<circle cx="130.4" cy="640.5" r="4.6" fill="none" stroke="#B8F0A8" stroke-width="1" opacity="0.6"/>
<text x="123.15" y="653" font-size="8.2" fill="#101010" font-weight="bold" font-style="italic" textLength="11.5" lengthAdjust="spacingAndGlyphs">DC</text>
<circle cx="152" cy="640.5" r="3.6" fill="url(#ledOff)"/>
<text x="141.75" y="653" font-size="8.2" fill="#101010" font-weight="bold" font-style="italic" textLength="17.5" lengthAdjust="spacingAndGlyphs">GND</text>
<circle cx="174" cy="640.5" r="3.6" fill="url(#ledOff)"/>
<text x="166.85" y="653" font-size="8.2" fill="#101010" font-weight="bold" font-style="italic" textLength="11.3" lengthAdjust="spacingAndGlyphs">AC</text>
<text x="198.5" y="651.5" font-size="16.3" fill="#101010" font-weight="bold" font-style="italic" textLength="32" lengthAdjust="spacingAndGlyphs">CH2</text>
<rect x="237.5" y="637" width="16" height="16" fill="#808080"/>
<rect x="237.5" y="637" width="16" height="1" fill="#383838"/>
<rect x="237.5" y="637" width="1" height="16" fill="#383838"/>
<rect x="237.5" y="652" width="16" height="1" fill="#484848"/>
<rect x="252.5" y="637" width="1" height="16" fill="#484848"/>
<rect x="238.5" y="638" width="14" height="1" fill="#B0B0B0"/>
<rect x="238.5" y="638" width="1" height="14" fill="#B0B0B0"/>
<circle cx="267.4" cy="640.5" r="3.6" fill="url(#ledOn)"/>
<circle cx="267.4" cy="640.5" r="4.6" fill="none" stroke="#B8F0A8" stroke-width="1" opacity="0.6"/>
<text x="259.65" y="653" font-size="8.2" fill="#101010" font-weight="bold" font-style="italic" textLength="11.5" lengthAdjust="spacingAndGlyphs">DC</text>
<circle cx="289.0" cy="640.5" r="3.6" fill="url(#ledOff)"/>
<text x="278.25" y="653" font-size="8.2" fill="#101010" font-weight="bold" font-style="italic" textLength="17.5" lengthAdjust="spacingAndGlyphs">GND</text>
<circle cx="311.0" cy="640.5" r="3.6" fill="url(#ledOff)"/>
<text x="303.35" y="653" font-size="8.2" fill="#101010" font-weight="bold" font-style="italic" textLength="11.3" lengthAdjust="spacingAndGlyphs">AC</text>
<path d="M340.5 423.5 H347.5 V495.5 L354.5 503.5 H365.5 V520.5 H344.5 L330.5 506.5 V435.5 Z" fill="#E6E6E6" stroke="#303030"/>
<path d="M350.5 423.5 H416.5 L427.5 434.5 V509.5 L416.5 520.5 H402.5 V503.5 L410.5 495.5 V445.5 L405.5 440.5 H350.5 Z" fill="#E6E6E6" stroke="#303030"/>
<text x="355.8" y="435" font-size="9" fill="#101010" textLength="49" lengthAdjust="spacingAndGlyphs">500 200 100</text>
<text x="340.7" y="446" font-size="9" fill="#101010" text-anchor="middle">1</text>
<text x="340.7" y="464" font-size="9" fill="#101010" text-anchor="middle">2</text>
<text x="340.7" y="479.3" font-size="9" fill="#101010" text-anchor="middle">5</text>
<text x="340.7" y="497" font-size="9" fill="#101010" text-anchor="middle">10</text>
<text x="354" y="514.8" font-size="9" fill="#101010" text-anchor="middle">20</text>
<text x="419" y="446" font-size="9" fill="#101010" text-anchor="middle">50</text>
<text x="419" y="464" font-size="9" fill="#101010" text-anchor="middle">20</text>
<text x="419" y="481.3" font-size="9" fill="#101010" text-anchor="middle">10</text>
<text x="419" y="496.3" font-size="9" fill="#101010" text-anchor="middle">5</text>
<text x="410" y="515.2" font-size="9" fill="#101010" text-anchor="middle">2</text>
<text x="362.4" y="451" font-size="9" fill="#181818" font-weight="bold" font-style="italic" textLength="35" lengthAdjust="spacingAndGlyphs">Y-Gain 1</text>
<circle cx="380.2" cy="475.3" r="17.8" fill="url(#kRed)"/>
<line x1="380.2" y1="475.3" x2="363.2" y2="476.5" stroke="#2C1818" stroke-width="1.8"/>
<rect x="369" y="507.5" width="30" height="12.5" fill="#000" rx="3"/>
<text x="384" y="518" font-size="11.5" fill="#48E048" text-anchor="middle">5.0</text>
<text x="342" y="531" font-size="9.5" fill="#181818" textLength="20.7" lengthAdjust="spacingAndGlyphs">V/Div</text>
<text x="393.7" y="531" font-size="9.5" fill="#181818" textLength="28" lengthAdjust="spacingAndGlyphs">mV/Div</text>
<path d="M340.5 544.5 H347.5 V616.5 L354.5 624.5 H365.5 V641.5 H344.5 L330.5 627.5 V556.5 Z" fill="#E6E6E6" stroke="#303030"/>
<path d="M350.5 544.5 H416.5 L427.5 555.5 V630.5 L416.5 641.5 H402.5 V624.5 L410.5 616.5 V566.5 L405.5 561.5 H350.5 Z" fill="#E6E6E6" stroke="#303030"/>
<text x="355.8" y="556" font-size="9" fill="#101010" textLength="49" lengthAdjust="spacingAndGlyphs">500 200 100</text>
<text x="340.7" y="567" font-size="9" fill="#101010" text-anchor="middle">1</text>
<text x="340.7" y="585" font-size="9" fill="#101010" text-anchor="middle">2</text>
<text x="340.7" y="600.3" font-size="9" fill="#101010" text-anchor="middle">5</text>
<text x="340.7" y="618" font-size="9" fill="#101010" text-anchor="middle">10</text>
<text x="354" y="635.8" font-size="9" fill="#101010" text-anchor="middle">20</text>
<text x="419" y="567" font-size="9" fill="#101010" text-anchor="middle">50</text>
<text x="419" y="585" font-size="9" fill="#101010" text-anchor="middle">20</text>
<text x="419" y="602.3" font-size="9" fill="#101010" text-anchor="middle">10</text>
<text x="419" y="617.3" font-size="9" fill="#101010" text-anchor="middle">5</text>
<text x="410" y="636.2" font-size="9" fill="#101010" text-anchor="middle">2</text>
<text x="362.4" y="572" font-size="9" fill="#181818" font-weight="bold" font-style="italic" textLength="35" lengthAdjust="spacingAndGlyphs">Y-Gain 2</text>
<circle cx="380.2" cy="598" r="17.8" fill="url(#kRed)"/>
<line x1="380.2" y1="598" x2="372.7" y2="582.7" stroke="#2C1818" stroke-width="1.8"/>
<rect x="369" y="629.5" width="30" height="12.5" fill="#000" rx="3"/>
<text x="384" y="640" font-size="11.5" fill="#48E048" text-anchor="middle">500m</text>
<text x="342" y="652" font-size="9.5" fill="#181818" textLength="20.7" lengthAdjust="spacingAndGlyphs">V/Div</text>
<text x="393.7" y="652" font-size="9.5" fill="#181818" textLength="28" lengthAdjust="spacingAndGlyphs">mV/Div</text>
<path d="M447.5 537.5 H457.5 V554.5 L451.5 560.5 V617.5 L458.5 624.5 H479.5 V640.5 H446.5 L434.5 628.5 V551.5 Z" fill="#E6E6E6" stroke="#303030"/>
<path d="M461.5 537.5 H524.5 L537.5 551.5 V640.5 H514.5 V624.5 L521.5 617.5 V560.5 L514.5 554.5 H461.5 Z" fill="#E6E6E6" stroke="#303030"/>
<text x="463.9" y="550" font-size="9" fill="#101010" textLength="60.3" lengthAdjust="spacingAndGlyphs">500 200 100 50</text>
<text x="453.2" y="550" font-size="9" fill="#101010" text-anchor="middle">1</text>
<text x="443.8" y="566" font-size="9" fill="#101010" text-anchor="middle">2</text>
<text x="443.8" y="579.7" font-size="9" fill="#101010" text-anchor="middle">5</text>
<text x="443.8" y="593.8" font-size="9" fill="#101010" text-anchor="middle">10</text>
<text x="443.8" y="607.2" font-size="9" fill="#101010" text-anchor="middle">20</text>
<text x="443.8" y="621.3" font-size="9" fill="#101010" text-anchor="middle">50</text>
<text x="445.8" y="635" font-size="9" fill="#101010" textLength="30.2" lengthAdjust="spacingAndGlyphs">100 200</text>
<text x="529.6" y="566" font-size="9" fill="#101010" text-anchor="middle">20</text>
<text x="529.6" y="579.7" font-size="9" fill="#101010" text-anchor="middle">10</text>
<text x="529.6" y="593.5" font-size="9" fill="#101010" text-anchor="middle">5</text>
<text x="529.6" y="607.2" font-size="9" fill="#101010" text-anchor="middle">2</text>
<text x="529.6" y="621.3" font-size="9" fill="#101010" text-anchor="middle">1</text>
<text x="525" y="635.2" font-size="9" fill="#101010" text-anchor="middle">0.5</text>
<text x="466.4" y="566" font-size="9.5" fill="#181818" font-weight="bold" font-style="italic" textLength="40" lengthAdjust="spacingAndGlyphs">Timebase</text>
<circle cx="486.4" cy="594.5" r="18.5" fill="url(#kBlue)"/>
<line x1="468.2" y1="594" x2="486.4" y2="594" stroke="#20202C" stroke-width="1.8"/>
<rect x="482.5" y="629.7" width="30" height="12" fill="#000" rx="3"/>
<text x="497.5" y="640" font-size="11.5" fill="#48E048" text-anchor="middle">10m</text>
<text x="449.8" y="651.5" font-size="9.5" fill="#181818" textLength="26.6" lengthAdjust="spacingAndGlyphs">ms/Div</text>
<text x="507.7" y="651.5" font-size="9.5" fill="#181818" textLength="24.6" lengthAdjust="spacingAndGlyphs">µs/Div</text>
<text x="433.8" y="430" font-size="8.6" fill="#181818" font-weight="bold" font-style="italic" textLength="24.7" lengthAdjust="spacingAndGlyphs">Y-Pos 1</text>
<circle cx="446" cy="450.3" r="13.3" fill="url(#kGreen)"/>
<line x1="445.2" y1="437.3" x2="445.2" y2="450.8" stroke="#202020" stroke-width="1.6"/>
<text x="433" y="478.3" font-size="8.6" fill="#181818" font-weight="bold" font-style="italic" textLength="25" lengthAdjust="spacingAndGlyphs">Y-Pos 2</text>
<circle cx="446" cy="498.2" r="13.3" fill="url(#kGreen)"/>
<line x1="445.2" y1="485.2" x2="445.2" y2="498.7" stroke="#202020" stroke-width="1.6"/>
<text x="473.5" y="491.8" font-size="9.3" fill="#181818" font-weight="bold" font-style="italic" textLength="28.3" lengthAdjust="spacingAndGlyphs">Trigger</text>
<text x="515.5" y="491.8" font-size="9.3" fill="#181818" font-weight="bold" font-style="italic" textLength="24.7" lengthAdjust="spacingAndGlyphs">X -Pos</text>
<circle cx="486.5" cy="512.3" r="13.3" fill="url(#kBlue)"/>
<line x1="485.7" y1="499.29999999999995" x2="485.7" y2="512.8" stroke="#202020" stroke-width="1.6"/>
<circle cx="528.5" cy="512.3" r="13.3" fill="url(#kBlue)"/>
<line x1="527.7" y1="499.29999999999995" x2="527.7" y2="512.8" stroke="#202020" stroke-width="1.6"/>
<rect x="478" y="425" width="20" height="20" fill="#808080"/>
<rect x="478" y="425" width="20" height="1" fill="#383838"/>
<rect x="478" y="425" width="1" height="20" fill="#383838"/>
<rect x="478" y="444" width="20" height="1" fill="#484848"/>
<rect x="497" y="425" width="1" height="20" fill="#484848"/>
<rect x="479" y="426" width="18" height="1" fill="#B0B0B0"/>
<rect x="479" y="426" width="1" height="18" fill="#B0B0B0"/>
<rect x="478" y="454" width="20" height="20" fill="#808080"/>
<rect x="478" y="454" width="20" height="1" fill="#383838"/>
<rect x="478" y="454" width="1" height="20" fill="#383838"/>
<rect x="478" y="473" width="20" height="1" fill="#484848"/>
<rect x="497" y="454" width="1" height="20" fill="#484848"/>
<rect x="479" y="455" width="18" height="1" fill="#B0B0B0"/>
<rect x="479" y="455" width="1" height="18" fill="#B0B0B0"/>
<text x="507.2" y="430" font-size="8.8" fill="#181818" font-weight="bold" font-style="italic" textLength="18.3" lengthAdjust="spacingAndGlyphs">Ch.1</text>
<text x="507.2" y="442.8" font-size="8.8" fill="#181818" font-weight="bold" font-style="italic" textLength="18.3" lengthAdjust="spacingAndGlyphs">Ch.2</text>
<text x="507.7" y="460.7" font-size="8.8" fill="#181818" font-weight="bold" font-style="italic" textLength="16.6" lengthAdjust="spacingAndGlyphs">Dual</text>
<text x="508.8" y="473.3" font-size="8.8" fill="#181818" font-weight="bold" font-style="italic" textLength="13" lengthAdjust="spacingAndGlyphs">X-Y</text>
<circle cx="537.3" cy="428.2" r="3.6" fill="url(#ledOn)"/>
<circle cx="537.3" cy="428.2" r="4.6" fill="none" stroke="#B8F0A8" stroke-width="1" opacity="0.6"/>
<circle cx="537.3" cy="440.2" r="3.6" fill="url(#ledOff)"/>
<circle cx="537.3" cy="458.2" r="3.6" fill="url(#ledOff)"/>
<circle cx="537.3" cy="470.3" r="3.6" fill="url(#ledOff)"/>
<rect x="87" y="65" width="1" height="17" fill="#A4A190"/>
<rect x="88" y="65" width="1" height="17" fill="#fff"/>
<rect x="137" y="65" width="1" height="17" fill="#A4A190"/>
<rect x="138" y="65" width="1" height="17" fill="#fff"/>
<rect x="189" y="65" width="1" height="17" fill="#A4A190"/>
<rect x="190" y="65" width="1" height="17" fill="#fff"/>
<rect x="245" y="65" width="1" height="17" fill="#A4A190"/>
<rect x="246" y="65" width="1" height="17" fill="#fff"/>
<rect x="274" y="65" width="1" height="17" fill="#A4A190"/>
<rect x="275" y="65" width="1" height="17" fill="#fff"/>
<rect x="389" y="65" width="1" height="17" fill="#A4A190"/>
<rect x="390" y="65" width="1" height="17" fill="#fff"/>
<rect x="445" y="65" width="1" height="17" fill="#A4A190"/>
<rect x="446" y="65" width="1" height="17" fill="#fff"/>
<rect x="516" y="65" width="1" height="17" fill="#A4A190"/>
<rect x="517" y="65" width="1" height="17" fill="#fff"/>
<rect x="608" y="65" width="1" height="17" fill="#A4A190"/>
<rect x="609" y="65" width="1" height="17" fill="#fff"/>
<rect x="701" y="65" width="1" height="17" fill="#A4A190"/>
<rect x="702" y="65" width="1" height="17" fill="#fff"/>
<rect x="758" y="65" width="1" height="17" fill="#A4A190"/>
<rect x="759" y="65" width="1" height="17" fill="#fff"/>
<rect x="808" y="65" width="1" height="17" fill="#A4A190"/>
<rect x="809" y="65" width="1" height="17" fill="#fff"/>
<rect x="922" y="65" width="1" height="17" fill="#A4A190"/>
<rect x="923" y="65" width="1" height="17" fill="#fff"/>
<rect x="971" y="65" width="1" height="17" fill="#A4A190"/>
<rect x="972" y="65" width="1" height="17" fill="#fff"/>
<path d="M25.5 67.5 H32.5 L35.5 70.5 V79.5 H25.5 Z" fill="#fff" stroke="#000" stroke-width="1.3"/>
<path d="M32.5 67.5 V70.5 H35.5" fill="none" stroke="#000" stroke-width="0.9"/>
<path d="M45.5 78.5 V70.5 H49.5 L50.5 71.5 H55.5 V73.5" fill="#D8D838" stroke="#000"/>
<path d="M45.5 78.5 L48.5 73.5 H60 L56.5 78.5 Z" fill="#C4C42C" stroke="#000"/>
<path d="M54 69.5 Q57 66.5 59.5 69.5" fill="none" stroke="#000" stroke-width="1.2"/>
<path d="M60.5 67.5 V71 H57 Z" fill="#000"/>
<rect x="67" y="67" width="14" height="13.5" fill="#fff" rx="2"/>
<rect x="66" y="66" width="14" height="13.5" fill="#ACA899" rx="2"/>
<rect x="101.5" y="66.5" width="8.5" height="12" fill="#F4F2EA" stroke="#ACA899" stroke-width="1"/>
<path d="M103 71 h6 M103 74 h6 M103 77 h6 M104.5 69 v9 M107.5 69 v9" fill="none" stroke="#ACA899" stroke-width="0.8"/>
<rect x="95" y="71" width="9" height="10.5" fill="#fff" rx="2"/>
<rect x="94" y="70" width="9" height="10.5" fill="#ACA899" rx="2"/>
<path d="M98 69 v-2 h5" fill="none" stroke="#ACA899"/>
<rect x="115.5" y="66.5" width="9" height="12" fill="#fff" stroke="#000" stroke-width="1.3"/>
<rect x="117.4" y="69.9" width="1.2" height="1.2" fill="#000"/>
<rect x="119.9" y="69.9" width="1.2" height="1.2" fill="#000"/>
<rect x="122.4" y="69.9" width="1.2" height="1.2" fill="#000"/>
<rect x="117.4" y="72.4" width="1.2" height="1.2" fill="#000"/>
<rect x="119.9" y="72.4" width="1.2" height="1.2" fill="#000"/>
<rect x="122.4" y="72.4" width="1.2" height="1.2" fill="#000"/>
<rect x="117.4" y="74.9" width="1.2" height="1.2" fill="#000"/>
<rect x="119.9" y="74.9" width="1.2" height="1.2" fill="#000"/>
<rect x="122.4" y="74.9" width="1.2" height="1.2" fill="#000"/>
<rect x="122.5" y="72.5" width="8.5" height="8" fill="#A8A81C" stroke="#000" stroke-width="1.2"/>
<rect x="124.5" y="73" width="4" height="2.5" fill="#E8E8D8"/>
<rect x="126" y="77.5" width="3" height="3" fill="#000"/>
<path d="M121 68.5 h5 v2.5" fill="none" stroke="#000" stroke-width="1.1"/>
<path d="M124 70.5 h4 l-2 2.5 z" fill="#000"/>
<path d="M149.5 72 L152.5 66.5 H159.5 L157.5 72 Z" fill="#fff" stroke="#000" stroke-width="1.2"/>
<path d="M152.5 68.5 h5 M151.5 70.3 h5" fill="none" stroke="#000" stroke-width="0.8"/>
<path d="M145.5 72.5 H158.5 L160 74 V79 H147 L145.5 77.5 Z" fill="#D8D8D0" stroke="#000" stroke-width="1.2"/>
<rect x="146.5" y="75" width="11" height="1.4" fill="#E8D048"/>
<rect x="147.5" y="79" width="11" height="1.8" fill="#000"/>
<path d="M158.5 72.5 V77.5 L160 79" fill="none" stroke="#000" stroke-width="0.9"/>
<path d="M167.5 66.5 H175.5 L178.5 69.5 V80.0 H167.5 Z" fill="#fff" stroke="#000" stroke-width="1.3"/>
<path d="M175.5 66.5 V69.5 H178.5" fill="none" stroke="#000" stroke-width="0.9"/>
<rect x="170.5" y="72" width="4.5" height="6" fill="#808080"/>
<path d="M203.5 66.5 H212.5 L215.5 69.5 V80.0 H203.5 Z" fill="#F4FAF4" stroke="#000" stroke-width="1.3"/>
<path d="M212.5 66.5 V69.5 H215.5" fill="none" stroke="#000" stroke-width="0.9"/>
<path d="M206.5 72 A3.3 3.3 0 0 1 212 70.5" fill="none" stroke="#18A018" stroke-width="1.8"/>
<path d="M213.6 69 v4 h-4 z" fill="#18A018"/>
<path d="M212.8 75 A3.3 3.3 0 0 1 207.2 76.5" fill="none" stroke="#18A018" stroke-width="1.8"/>
<path d="M205.6 78 v-4 h4 z" fill="#18A018"/>
<rect x="221" y="63" width="20" height="20" fill="#F7F6F1"/>
<rect x="221" y="63" width="20" height="1" fill="#ACA899"/>
<rect x="221" y="63" width="1" height="20" fill="#ACA899"/>
<rect x="221" y="82" width="20" height="1" fill="#fff"/>
<rect x="240" y="63" width="1" height="20" fill="#fff"/>
<path d="M225.9 71.2 l0.8 -2 h2 l-0.8 2 z" fill="#000"/>
<path d="M230.0 71.2 l0.8 -2 h2 l-0.8 2 z" fill="#000"/>
<path d="M234.0 71.2 l0.8 -2 h2 l-0.8 2 z" fill="#000"/>
<path d="M225.9 75.5 l0.8 -2 h2 l-0.8 2 z" fill="#000"/>
<path d="M230.0 75.5 l0.8 -2 h2 l-0.8 2 z" fill="#000"/>
<path d="M234.0 75.5 l0.8 -2 h2 l-0.8 2 z" fill="#000"/>
<path d="M225.9 79.5 l0.8 -2 h2 l-0.8 2 z" fill="#000"/>
<path d="M230.0 79.5 l0.8 -2 h2 l-0.8 2 z" fill="#000"/>
<path d="M234.0 79.5 l0.8 -2 h2 l-0.8 2 z" fill="#000"/>
<line x1="253" y1="73.5" x2="268" y2="73.5" stroke="#000" stroke-width="1.2"/>
<line x1="260.5" y1="67" x2="260.5" y2="80" stroke="#000" stroke-width="1.2"/>
<rect x="258" y="71" width="5" height="5" fill="#F4F480" stroke="#000" stroke-width="1"/>
<path d="M288.5 66 l3.3 3.6 h-2 v2.6 h2.6 v-2 l3.6 3.3 l-3.6 3.3 v-2 h-2.6 v2.6 h2 l-3.3 3.6 l-3.3 -3.6 h2 v-2.6 h-2.6 v2 l-3.6 -3.3 l3.6 -3.3 v2 h2.6 v-2.6 h-2 z" fill="#0A0A8C"/>
<line x1="310.7" y1="75.0" x2="315.59999999999997" y2="80.3" stroke="#000" stroke-width="2.4"/>
<circle cx="307.4" cy="71.7" r="4.6" fill="#fff" stroke="#000" stroke-width="1.5"/>
<path d="M304.6 71.7 h5.6 M307.4 68.9 v5.6" fill="none" stroke="#000" stroke-width="1.6"/>
<line x1="332.6" y1="75.0" x2="337.5" y2="80.3" stroke="#000" stroke-width="2.4"/>
<circle cx="329.3" cy="71.7" r="4.6" fill="#fff" stroke="#000" stroke-width="1.5"/>
<path d="M326.5 71.7 h5.6" fill="none" stroke="#000" stroke-width="1.8"/>
<line x1="353.3" y1="75.0" x2="358.2" y2="80.3" stroke="#000" stroke-width="2.4"/>
<circle cx="350" cy="71.7" r="4.6" fill="#fff" stroke="#000" stroke-width="1.5"/>
<rect x="347.8" y="69.5" width="4.4" height="4.4" fill="#909090" stroke="#000" stroke-width="0.6"/>
<path d="M365.5 66 H380 V79 l-2 2 l-2 -3 l-2.5 3 l-2.5 -3 l-2.5 3 l-3 -2 Z" fill="#585858" stroke="#000" stroke-width="1.2"/>
<circle cx="372.3" cy="71.8" r="5" fill="#fff" stroke="#D0D0D0" stroke-width="0.8"/>
<path d="M406 73 Q410 67.5 413.5 71 Q415 73 413 76" fill="none" stroke="#1414C8" stroke-width="1.8"/>
<path d="M402.5 69 V75.5 H409 Z" fill="#1414C8"/>
<path d="M433 73 Q429 67.5 425.5 71 Q424 73 426 76" fill="none" stroke="#1414C8" stroke-width="1.8"/>
<path d="M436.5 69 V75.5 H430 Z" fill="#1414C8"/>
<path d="M456.5 67 L460 75.5 M461.5 67 L458 75.5" fill="none" stroke="#ACA899" stroke-width="1.3"/>
<circle cx="456.3" cy="78" r="2.2" fill="none" stroke="#ACA899" stroke-width="1.2"/>
<circle cx="461.3" cy="78" r="2.2" fill="none" stroke="#ACA899" stroke-width="1.2"/>
<path d="M473.5 67.5 H478.0 L480.5 70.0 V75.5 H473.5 Z" fill="#fff" stroke="#0A0A8C" stroke-width="1.3"/>
<path d="M478.0 67.5 V70.0 H480.5" fill="none" stroke="#0A0A8C" stroke-width="0.9"/>
<path d="M480.0 71.0 H485.0 L487.5 73.5 V79.5 H480.0 Z" fill="#fff" stroke="#0A0A8C" stroke-width="1.3"/>
<path d="M485.0 71.0 V73.5 H487.5" fill="none" stroke="#0A0A8C" stroke-width="0.9"/>
<path d="M475 70.5 h3.5 M475 72.5 h3 M481.5 75 h4.5 M481.5 77 h4.5" fill="none" stroke="#000" stroke-width="0.9"/>
<rect x="495.5" y="68.5" width="12" height="12" fill="#fff" rx="2"/>
<rect x="494.5" y="67.5" width="12" height="12" fill="#ACA899" rx="2"/>
<rect x="498" y="66" width="5" height="3" fill="#ACA899" rx="1"/>
<rect x="501.5" y="73.5" width="8.5" height="6.5" fill="#ECE9D8" stroke="#ACA899" stroke-width="1.2"/>
<path d="M503 76 h5" fill="none" stroke="#ACA899"/>
<rect x="525" y="67" width="13" height="5.5" fill="#fff"/>
<rect x="525" y="76" width="13" height="5.5" fill="#fff"/>
<rect x="524" y="66" width="13" height="5.5" fill="#ACA899"/>
<rect x="524" y="75" width="13" height="5.5" fill="#ACA899"/>
<rect x="529" y="71" width="3" height="5" fill="#ACA899"/>
<rect x="546" y="67" width="13" height="5.5" fill="#fff"/>
<rect x="546" y="76" width="13" height="5.5" fill="#fff"/>
<rect x="545" y="66" width="13" height="5.5" fill="#ACA899"/>
<rect x="545" y="75" width="13" height="5.5" fill="#ACA899"/>
<rect x="550" y="71" width="3" height="5" fill="#ACA899"/>
<rect x="566" y="67" width="16" height="15" fill="#fff"/>
<rect x="565" y="66" width="16" height="14.8" fill="#ACA899"/>
<rect x="588" y="67" width="14" height="14.5" fill="#fff"/>
<rect x="587" y="66" width="14.5" height="14.3" fill="#ACA899"/>
<circle cx="622" cy="72.5" r="6" fill="#ACA899"/>
<path d="M626 77 l4 4" fill="none" stroke="#ACA899" stroke-width="2.4"/>
<rect x="619.5" y="70" width="1.4" height="1.4" fill="#ECE9D8"/>
<rect x="623.5" y="69.5" width="1.4" height="1.4" fill="#ECE9D8"/>
<rect x="621" y="73.5" width="1.4" height="1.4" fill="#ECE9D8"/>
<rect x="625" y="73" width="1.4" height="1.4" fill="#ECE9D8"/>
<rect x="618.5" y="74.5" width="1.4" height="1.4" fill="#ECE9D8"/>
<path d="M640 73.5 h5 M645.5 68 l2 6.5 l-3 5.5 M647 71 l4.5 -3.5 M648 74 l4 -0.5 M645 70 l-4 -2" fill="none" stroke="#ACA899" stroke-width="1.8"/>
<rect x="660" y="68" width="11" height="11" fill="#ACA899"/>
<path d="M658 70 h15 M658 72.5 h15 M658 75 h15 M658 77.5 h15 M662 66 v15 M664.5 66 v15 M667 66 v15 M669.5 66 v15" fill="none" stroke="#ACA899" stroke-width="0.9"/>
<path d="M680 79.5 L689 70" fill="none" stroke="#ACA899" stroke-width="2.2"/>
<path d="M686 68 L689.5 66.8 L693 71.5 L691 73 Z" fill="#ACA899"/>
<rect x="713" y="63" width="21" height="20" fill="#F7F6F1"/>
<rect x="713" y="63" width="21" height="1" fill="#ACA899"/>
<rect x="713" y="63" width="1" height="20" fill="#ACA899"/>
<rect x="713" y="82" width="21" height="1" fill="#fff"/>
<rect x="733" y="63" width="1" height="20" fill="#fff"/>
<rect x="734" y="63" width="20" height="20" fill="#F7F6F1"/>
<rect x="734" y="63" width="20" height="1" fill="#ACA899"/>
<rect x="734" y="63" width="1" height="20" fill="#ACA899"/>
<rect x="734" y="82" width="20" height="1" fill="#fff"/>
<rect x="753" y="63" width="1" height="20" fill="#fff"/>
<circle cx="721" cy="73.2" r="4.6" fill="#fff" stroke="#000" stroke-width="1.3"/>
<path d="M721 70 V73.5 H724" fill="none" stroke="#000"/>
<path d="M722 69.2 Q731.5 67 731.5 75 V79 H727.5 V75.5 Q727.5 72.5 724 73.5" fill="#B41818" stroke="#6C0C0C" stroke-width="0.8"/>
<rect x="719" y="78" width="5" height="4" fill="#505050" stroke="#000" stroke-width="1"/>
<rect x="727.3" y="78.5" width="5" height="3.5" fill="#505050" stroke="#000" stroke-width="1"/>
<path d="M745 71 H751.5 V74.8 H743.5 V78.8 H746" fill="none" stroke="#2828D0" stroke-width="1.2"/>
<path d="M739.5 75 H741.5 M740.5 74.8 V81 H752" fill="none" stroke="#E02020" stroke-width="1.2"/>
<rect x="739.5" y="69.5" width="6" height="3" fill="#18B018" stroke="#000" stroke-width="1"/>
<rect x="746" y="77.5" width="6" height="3" fill="#18B018" stroke="#000" stroke-width="1"/>
<path d="M765 80.5 V73 L767.5 68.5 V66.5 H770.5 V68.5 L772 72 H773 L774.5 68.5 V66.5 H777.5 V68.5 L780 73 V80.5 H775 V75 H770 V80.5 Z" fill="#0A0A8C"/>
<rect x="767" y="75" width="1.2" height="3.5" fill="#fff"/>
<rect x="776.6" y="75" width="1.2" height="3.5" fill="#fff"/>
<path d="M787.5 69.5 h8 M787.5 80 L798 68 M792 80 h8 l-3 -5 z" fill="none" stroke="#ACA899" stroke-width="1.7"/>
<path d="M796.5 66.5 l3 1 l-1 3" fill="none" stroke="#ACA899" stroke-width="1.6"/>
<path d="M817.5 66.5 H825.0 L828.5 70.0 V80.0 H817.5 Z" fill="#ECE9D8" stroke="#ACA899" stroke-width="1.3"/>
<path d="M825.0 66.5 V70.0 H828.5" fill="none" stroke="#ACA899" stroke-width="0.9"/>
<path d="M820 74.5 h6.5 M823.2 71 v7" fill="none" stroke="#ACA899" stroke-width="1.8"/>
<rect x="839.5" y="68.5" width="9" height="10" fill="none" stroke="#ACA899" stroke-width="1.6"/>
<path d="M837.5 66.5 L851 80.5 M851 66.5 L837.5 80.5" fill="none" stroke="#ACA899" stroke-width="1.6"/>
<rect x="842" y="71" width="4" height="5" fill="#ACA899"/>
<path d="M857.5 66.5 H863.0 L866.0 69.5 V80.0 H857.5 Z" fill="#fff" stroke="#000" stroke-width="1.3"/>
<path d="M863.0 66.5 V69.5 H866.0" fill="none" stroke="#000" stroke-width="0.9"/>
<path d="M858.5 74 l5 -4.2 v2.8 h9.5 v2.8 h-9.5 v2.8 z" fill="#1010D8"/>
<path d="M886.5 71 L880.5 77 M886.5 71 L892.5 77" fill="none" stroke="#D82020"/>
<rect x="884" y="67" width="5.6" height="4.8" fill="#18C018"/>
<rect x="878" y="76.6" width="5" height="3.6" fill="#18C018"/>
<rect x="890" y="76.6" width="4.6" height="3.6" fill="#18C018"/>
<path d="M884.5 74.5 A2.8 2.8 0 1 0 888.7 75" fill="none" stroke="#000" stroke-width="1.2"/>
<path d="M889.8 77.8 l-3 0.6 l1.2 -2.8 z" fill="#000"/>
<path d="M905.5 71 L901 77 M905.5 71 L913 77" fill="none" stroke="#D82020"/>
<rect x="902.8" y="67.4" width="5.8" height="4.4" fill="#F8F040"/>
<rect x="898.8" y="76.6" width="4.6" height="3.6" fill="#F8F040"/>
<rect x="911" y="76.6" width="4.5" height="3.6" fill="#F8F040"/>
<path d="M912.5 76 A3 3 0 0 0 912 70" fill="none" stroke="#000" stroke-width="1.2"/>
<path d="M910 68.2 l3.2 0.4 l-1.6 2.6 z" fill="#000"/>
<path d="M930.5 66.5 H938.0 L941.5 70.0 V80.0 H930.5 Z" fill="#fff" stroke="#000" stroke-width="1.3"/>
<path d="M938.0 66.5 V70.0 H941.5" fill="none" stroke="#000" stroke-width="0.9"/>
<text x="935.5" y="78.3" font-size="11" fill="#909010" font-weight="bold" text-anchor="middle">$</text>
<path d="M950.5 66.5 H958.0 L961.5 70.0 V80.0 H950.5 Z" fill="#fff" stroke="#000" stroke-width="1.3"/>
<path d="M958.0 66.5 V70.0 H961.5" fill="none" stroke="#000" stroke-width="0.9"/>
<path d="M957.5 69.5 q-3.5 2 -1.5 4 q2 2 -1.5 5" fill="none" stroke="#2060D0" stroke-width="1.5"/>
<rect x="978" y="67.5" width="16" height="13" fill="#D41818"/>
<text x="979" y="77.8" font-size="10.8" fill="#fff" font-weight="bold" textLength="14" lengthAdjust="spacingAndGlyphs">ARES</text>
<rect x="979.3" y="78.8" width="13.4" height="0.9" fill="#fff"/>
<path d="M17 104 h5 M17 109 h5 M28 106.5 h3.5" fill="none" stroke="#000" stroke-width="1.1"/>
<path d="M21.8 100.3 L28.6 106.5 L21.8 112.7 Z" fill="#BCBC24" stroke="#000" stroke-width="1.2"/>
<path d="M18 127.5 h13 M24.5 121 v13" fill="none" stroke="#20103C" stroke-width="1.2"/>
<rect x="22.5" y="125.5" width="4" height="4" fill="#6C28D8"/>
<rect x="17.5" y="143.5" width="14.5" height="10" fill="none" stroke="#0A0A8C" stroke-width="1.2" stroke-dasharray="1.2 1.2"/>
<text x="19.3" y="152" font-size="6.6" fill="#0A0A8C" font-weight="bold" textLength="11" lengthAdjust="spacingAndGlyphs">LBL</text>
<line x1="19" y1="163" x2="30.5" y2="163" stroke="#000" stroke-dasharray="3 0.8"/>
<line x1="19" y1="165.3" x2="30.5" y2="165.3" stroke="#000" stroke-dasharray="3 0.8"/>
<line x1="19" y1="169.3" x2="30.5" y2="169.3" stroke="#000" stroke-dasharray="3 0.8"/>
<line x1="19.5" y1="171.3" x2="30.5" y2="171.3" stroke="#000" stroke-dasharray="3 0.8"/>
<line x1="19" y1="173.5" x2="30.5" y2="173.5" stroke="#000" stroke-dasharray="3 0.8"/>
<line x1="20" y1="175.5" x2="27" y2="175.5" stroke="#000" stroke-dasharray="3 0.8"/>
<rect x="17" y="189" width="14" height="3" fill="#0A0A8C"/>
<rect x="21" y="184" width="1.4" height="12.5" fill="#0A0A8C"/>
<rect x="26.6" y="184" width="1.4" height="12.5" fill="#0A0A8C"/>
<path d="M17 208.5 h3.5 M17 214.3 h3.5 M27.5 208.5 h3.5 M27.5 214.3 h3.5" fill="none" stroke="#000" stroke-width="1.1"/>
<rect x="20.5" y="205.5" width="7" height="11.5" fill="#B4B41C" stroke="#000" stroke-width="1.2"/>
<path d="M20.3 225 V236.5 L23 234 L25.3 239 L27 238.2 L24.8 233.3 L28.5 233.2 Z" fill="#000"/>
<rect x="16" y="244" width="21" height="1" fill="#A4A190"/>
<rect x="16" y="245" width="21" height="1" fill="#fff"/>
<path d="M20.5 250.5 H27.5 L30.5 252.8 L27.5 255.2 H20.5 Z" fill="#BCBC24" stroke="#000" stroke-width="1.1"/>
<path d="M29.5 257.5 H21.5 L18.3 259.7 L21.5 262 H29.5 Z" fill="#BCBC24" stroke="#000" stroke-width="1.1"/>
<path d="M17 274 h4 M17 280.3 h4 M28.5 277 h3.5" fill="none" stroke="#18A018" stroke-width="1.2"/>
<path d="M22.8 272 v11 M24.4 272 L28.6 277.2 L24.4 282.5" fill="none" stroke="#000" stroke-width="1.3"/>
<path d="M18.5 292.5 V302.7 H31" fill="none" stroke="#000" stroke-width="1.2" stroke-dasharray="1.4 0.8"/>
<path d="M20 297 q1.5 -4.5 3 -1 q1.5 3.5 3 0 q1.5 -4 3 -0.5 q0.8 1.5 1.5 0.5" fill="none" stroke="#18A018" stroke-width="1.1"/>
<path d="M20 301 v-3 h2.3 v3 h2.3 v-3 h2.3 v3 h2.3 v-3 h1.6" fill="none" stroke="#A8A818"/>
<rect x="16.5" y="315.5" width="14" height="8" fill="none" stroke="#000" stroke-width="1.3" rx="1.6"/>
<path d="M19.5 318 v2.5 h8 v-2.5 M21 318.5 h1.6 M25.5 318.5 h1.6" fill="none" stroke="#000"/>
<circle cx="24.4" cy="340.8" r="6.6" fill="none" stroke="#000" stroke-width="1.4"/>
<path d="M20.8 342.5 q0 -4 2.2 -4 q1.6 0 1.6 2.4 q0 2.4 1.8 2.4 q1.8 0 1.8 -4" fill="none" stroke="#0A0A8C" stroke-width="1.7"/>
<path d="M17.5 367.9 L20 365.6" fill="none" stroke="#000"/>
<path d="M19.6 364.2 L24.8 359.4 L26.6 361.3 L21.4 366.2 Z" fill="#D8D830" stroke="#000" stroke-width="0.9"/>
<path d="M25.8 360.2 Q28.6 355 30 359 Q30.6 363 32.2 363.6" fill="none" stroke="#000" stroke-width="1.1"/>
<text x="16.3" y="361.5" font-size="7.5" fill="#0A0A8C" font-weight="bold" font-family="'Liberation Mono',monospace">V</text>
<path d="M17.5 388.4 L20 386.1" fill="none" stroke="#000"/>
<path d="M19.6 384.7 L24.8 379.9 L26.6 381.8 L21.4 386.7 Z" fill="#D8D830" stroke="#000" stroke-width="0.9"/>
<path d="M25.8 380.7 Q28.6 375.5 30 379.5 Q30.6 383.5 32.2 384.1" fill="none" stroke="#000" stroke-width="1.1"/>
<text x="16.3" y="382.0" font-size="7.5" fill="#0A0A8C" font-weight="bold" font-family="'Liberation Mono',monospace">I</text>
<rect x="14" y="394" width="21" height="21.5" fill="#F7F6F1"/>
<rect x="14" y="394" width="21" height="1" fill="#ACA899"/>
<rect x="14" y="394" width="1" height="21.5" fill="#ACA899"/>
<rect x="14" y="415" width="21" height="1" fill="#fff"/>
<rect x="34" y="394" width="1" height="21.5" fill="#fff"/>
<rect x="19.5" y="399.5" width="13.5" height="7" fill="#fff" stroke="#000" stroke-width="1.1"/>
<path d="M21 405.5 Q26 400 31.5 405.5" fill="none" stroke="#606060" stroke-width="0.8"/>
<line x1="24.5" y1="406.5" x2="28.3" y2="401.8" stroke="#D02020" stroke-width="0.9"/>
<rect x="21" y="406.5" width="11" height="7" fill="#282828"/>
<rect x="23" y="408.5" width="3.6" height="2.6" fill="#A0A0A0"/>
<rect x="27.6" y="408.5" width="2.6" height="2.6" fill="#A0A0A0"/>
<rect x="16" y="416.5" width="21" height="1" fill="#A4A190"/>
<rect x="16" y="417.5" width="21" height="1" fill="#fff"/>
<line x1="16.3" y1="436.2" x2="30" y2="422.6" stroke="#000" stroke-width="2"/>
<rect x="18.5" y="444.5" width="12" height="12" fill="#04B4B8" stroke="#000" stroke-width="1.2"/>
<path d="M21.5 465.5 h6 l3.2 3.2 v5.6 l-3.2 3.2 h-6 l-3.2 -3.2 v-5.6 z" fill="#04B4B8" stroke="#000" stroke-width="1.2"/>
<path d="M19.8 486.6 Q29.5 487.5 30.2 496.5" fill="none" stroke="#000" stroke-width="1.5"/>
<path d="M19.6 487.5 V497.5 H30.2" fill="none" stroke="#0A0A8C" stroke-width="1.1" stroke-dasharray="1.5 1.2"/>
<path d="M17 511.5 q0 -3.5 3.5 -3.5 q2.4 0 3.6 2 q1.2 -2 3.6 -2 q3.6 0 3.6 3.5 v4.4 q0 3.5 -3.6 3.5 q-2.4 0 -3.6 -2 q-1.2 2 -3.6 2 q-3.5 0 -3.5 -3.5 z" fill="#04B4B8" stroke="#000" stroke-width="1.2"/>
<text x="24.7" y="541.3" font-size="19.5" fill="#000" font-weight="bold" text-anchor="middle" font-family="'Liberation Serif',serif">A</text>
<rect x="18.5" y="549.5" width="12" height="12.5" fill="#04B4B8" stroke="#000" stroke-width="1.3"/>
<path d="M28 552.5 H21 V555.7 H28 V559 H21" fill="none" stroke="#000" stroke-width="1.4"/>
<path d="M16.5 576.3 h14 M23.5 569.3 v14" fill="none" stroke="#000" stroke-width="1.2"/>
<rect x="21.5" y="574.3" width="4" height="4" fill="#04B4B8" stroke="#185858" stroke-width="0.7"/>
<rect x="16" y="701" width="1" height="20" fill="#fff"/>
<rect x="17" y="701" width="1" height="20" fill="#E4E1D0"/>
<rect x="18" y="702" width="1" height="20" fill="#A8A594"/>
<rect x="16" y="721" width="3" height="1" fill="#A8A594"/>
<rect x="150" y="701" width="1" height="20" fill="#fff"/>
<rect x="151" y="701" width="1" height="20" fill="#E4E1D0"/>
<rect x="152" y="702" width="1" height="20" fill="#A8A594"/>
<rect x="150" y="721" width="3" height="1" fill="#A8A594"/>
<rect x="323" y="701" width="1" height="20" fill="#fff"/>
<rect x="324" y="701" width="1" height="20" fill="#E4E1D0"/>
<rect x="325" y="702" width="1" height="20" fill="#A8A594"/>
<rect x="323" y="721" width="3" height="1" fill="#A8A594"/>
<rect x="95" y="702" width="1" height="19" fill="#ACA899"/>
<rect x="96" y="702" width="1" height="19" fill="#fff"/>
<rect x="146" y="700" width="1" height="22" fill="#ACA899"/>
<rect x="147" y="700" width="1" height="22" fill="#fff"/>
<rect x="319" y="700" width="1" height="22" fill="#ACA899"/>
<rect x="320" y="700" width="1" height="22" fill="#fff"/>
<path d="M36.5 709 A6 6 0 1 0 37.5 713.5" fill="none" stroke="#1010D8" stroke-width="2.6"/>
<path d="M33.5 705 L39.5 705.5 L38.8 711.5 Z" fill="#1010D8"/>
<path d="M47.5 709 A6 6 0 1 1 46.5 713.5" fill="none" stroke="#1010D8" stroke-width="2.6"/>
<path d="M50.5 705 L44.5 705.5 L45.2 711.5 Z" fill="#1010D8"/>
<rect x="65" y="703" width="27" height="16" fill="#fff"/>
<rect x="65" y="703" width="27" height="1" fill="#404040"/>
<rect x="65" y="703" width="1" height="16" fill="#404040"/>
<rect x="66" y="704" width="25" height="1" fill="#808080"/>
<rect x="66" y="704" width="1" height="14" fill="#808080"/>
<text x="67" y="716" font-size="12" fill="#000" textLength="9" lengthAdjust="spacingAndGlyphs">0°</text>
<path d="M101 711.5 L107 706.5 V709.8 H110 V713.2 H107 V716.5 Z" fill="#8C8CF0"/>
<path d="M117.5 711.5 L111 706 V709.8 H108.5 V713.2 H111 V717 Z" fill="#1010D8"/>
<path d="M130.8 705 L135.8 711 H132.5 V712 H129 V711 H125.8 Z" fill="#1010D8"/>
<path d="M130.8 719 L135.8 713 H132.5 V712 H129 V713 H125.8 Z" fill="#8C8CF0"/>
<rect x="158" y="703" width="40" height="18" fill="#000"/>
<rect x="159" y="704" width="38" height="16" fill="#ECE9D8"/>
<rect x="159" y="704" width="38" height="1" fill="#fff"/>
<rect x="159" y="704" width="1" height="16" fill="#fff"/>
<rect x="160" y="719" width="37" height="1" fill="#ACA899"/>
<rect x="196" y="705" width="1" height="15" fill="#ACA899"/>
<rect x="197" y="703" width="40" height="18" fill="#000"/>
<rect x="198" y="704" width="38" height="16" fill="#ECE9D8"/>
<rect x="198" y="704" width="38" height="1" fill="#fff"/>
<rect x="198" y="704" width="1" height="16" fill="#fff"/>
<rect x="199" y="719" width="37" height="1" fill="#ACA899"/>
<rect x="235" y="705" width="1" height="15" fill="#ACA899"/>
<rect x="236" y="703" width="40" height="18" fill="#000"/>
<rect x="237" y="704" width="38" height="16" fill="#ECE9D8"/>
<rect x="237" y="704" width="38" height="1" fill="#fff"/>
<rect x="237" y="704" width="1" height="16" fill="#fff"/>
<rect x="238" y="719" width="37" height="1" fill="#ACA899"/>
<rect x="274" y="705" width="1" height="15" fill="#ACA899"/>
<rect x="275" y="703" width="40" height="18" fill="#000"/>
<rect x="276" y="704" width="38" height="16" fill="#ECE9D8"/>
<rect x="276" y="704" width="38" height="1" fill="#fff"/>
<rect x="276" y="704" width="1" height="16" fill="#fff"/>
<rect x="277" y="719" width="37" height="1" fill="#ACA899"/>
<rect x="313" y="705" width="1" height="15" fill="#ACA899"/>
<path d="M175 706 L183 711.5 L175 717 Z" fill="#148214"/>
<rect x="212" y="706" width="3" height="11" fill="#000"/>
<path d="M216 706 L223.5 711.5 L216 717 Z" fill="#000"/>
<rect x="251.5" y="706" width="3.5" height="11" fill="#000"/>
<rect x="257.5" y="706" width="3.5" height="11" fill="#000"/>
<rect x="290" y="707" width="10" height="9.5" fill="#000"/>
<rect x="330" y="704" width="539" height="1" fill="#ACA899"/>
<rect x="330" y="704" width="1" height="15" fill="#ACA899"/>
<rect x="330" y="718" width="539" height="1" fill="#fff"/>
<rect x="868" y="704" width="1" height="15" fill="#fff"/>
<rect x="882" y="704" width="126" height="1" fill="#ACA899"/>
<rect x="882" y="704" width="1" height="15" fill="#ACA899"/>
<rect x="882" y="718" width="126" height="1" fill="#fff"/>
<rect x="1007" y="704" width="1" height="15" fill="#fff"/>
<rect x="874" y="701" width="1" height="21" fill="#ACA899"/>
<rect x="875" y="701" width="1" height="21" fill="#fff"/>
<text x="333" y="716" font-size="12" fill="#1A5A1A" textLength="206" lengthAdjust="spacingAndGlyphs">ANIMATING: 00:00:05.84 (CPU load 100%)</text>
<defs>
<linearGradient id="gTask" x1="0" y1="0" x2="0" y2="1">
<stop offset="0" stop-color="#1F55C8"/><stop offset="0.08" stop-color="#3B84F0"/><stop offset="0.2" stop-color="#2868E4"/>
<stop offset="0.5" stop-color="#245EDC"/><stop offset="0.85" stop-color="#2259D4"/><stop offset="1" stop-color="#193FA0"/>
</linearGradient>
<linearGradient id="gTray" x1="0" y1="0" x2="0" y2="1">
<stop offset="0" stop-color="#0C6CCC"/><stop offset="0.08" stop-color="#1CA8F4"/><stop offset="0.2" stop-color="#1498EC"/>
<stop offset="0.6" stop-color="#128EE6"/><stop offset="0.9" stop-color="#1288E0"/><stop offset="1" stop-color="#0C60B4"/>
</linearGradient>
<linearGradient id="gStart" x1="0" y1="0" x2="0" y2="1">
<stop offset="0" stop-color="#2C7C2C"/><stop offset="0.1" stop-color="#5CB45C"/><stop offset="0.25" stop-color="#3C9C3C"/>
<stop offset="0.7" stop-color="#348E34"/><stop offset="1" stop-color="#256825"/>
</linearGradient>
<radialGradient id="gChev" cx="0.4" cy="0.35" r="0.7"><stop offset="0" stop-color="#5CB4FC"/><stop offset="0.6" stop-color="#2078E8"/><stop offset="1" stop-color="#1050C0"/></radialGradient>
<radialGradient id="gNero" cx="0.5" cy="0.7" r="0.7"><stop offset="0" stop-color="#FFD040"/><stop offset="0.45" stop-color="#F05818"/><stop offset="1" stop-color="#A80808"/></radialGradient>
</defs>
<rect x="0" y="738" width="1024" height="30" fill="url(#gTask)"/>
<path d="M0 738 H84 C94 740 98 752 96 768 H0 Z" fill="url(#gStart)"/>
<path d="M84 738 C94 740 98 752 96 768" fill="none" stroke="#1E5A1E" stroke-width="1.2" opacity="0.6"/>
<path d="M12 746.5 q3.5 -2.5 7 -0.8 l-1.3 6.3 q-3.5 -1.7 -7 0.8 z" fill="#E8542C"/>
<path d="M20.3 746 q3.5 1.8 7.2 -0.6 l-1.3 6.3 q-3.6 2.4 -7.2 0.6 z" fill="#6CC040"/>
<path d="M10.5 753.8 q3.5 -2.5 7 -0.8 l-1.3 6.3 q-3.5 -1.7 -7 0.8 z" fill="#4C88E8"/>
<path d="M18.8 753.4 q3.5 1.8 7.2 -0.6 l-1.3 6.3 q-3.6 2.4 -7.2 0.6 z" fill="#F4C430"/>
<text x="36.5" y="760" font-size="18.5" fill="#1C4C1C" font-weight="bold" font-style="italic" textLength="37" lengthAdjust="spacingAndGlyphs" opacity="0.7">пуск</text>
<text x="35.3" y="758.8" font-size="18.5" fill="#fff" font-weight="bold" font-style="italic" textLength="37" lengthAdjust="spacingAndGlyphs">пуск</text>
<rect x="110" y="747" width="11" height="11" fill="#F0F4FC" stroke="#3C6CC8" stroke-width="1.4" rx="2"/>
<path d="M113 755 l6 -7 l2 1.5 l-6 7 z" fill="#4C7CD8"/>
<path d="M112 750 h5 M112 753 h3" fill="none" stroke="#5C8CE0"/>
<rect x="119" y="748" width="3" height="2" fill="#E87C3C"/>
<text x="131.5" y="760" font-size="23.5" fill="#2C7CE4" font-weight="bold" font-style="italic" textLength="13" lengthAdjust="spacingAndGlyphs">e</text>
<path d="M131 757.5 Q136 744.5 146.5 745.5" fill="none" stroke="#8CC4F8" stroke-width="1.6"/>
<rect x="157.5" y="745.5" width="10" height="15" fill="#C4D4EC" stroke="#7C94C4" stroke-width="1"/>
<rect x="159" y="747" width="7" height="3" fill="#F4F8FC"/>
<rect x="159.0" y="752.0" width="1.5" height="1.5" fill="#5C74AC"/>
<rect x="159.0" y="754.5" width="1.5" height="1.5" fill="#5C74AC"/>
<rect x="159.0" y="757.0" width="1.5" height="1.5" fill="#5C74AC"/>
<rect x="161.5" y="752.0" width="1.5" height="1.5" fill="#5C74AC"/>
<rect x="161.5" y="754.5" width="1.5" height="1.5" fill="#5C74AC"/>
<rect x="161.5" y="757.0" width="1.5" height="1.5" fill="#5C74AC"/>
<rect x="164.0" y="752.0" width="1.5" height="1.5" fill="#5C74AC"/>
<rect x="164.0" y="754.5" width="1.5" height="1.5" fill="#5C74AC"/>
<rect x="164.0" y="757.0" width="1.5" height="1.5" fill="#5C74AC"/>
<rect x="177" y="745" width="16" height="15.5" fill="#000080"/>
<rect x="179" y="747.5" width="12" height="2.4" fill="#fff"/>
<text x="185" y="759" font-size="11" fill="#fff" font-weight="bold" text-anchor="middle" textLength="12" lengthAdjust="spacingAndGlyphs">W</text>
<rect x="200.5" y="745.5" width="15" height="15" fill="#2C8C2C" stroke="#C8E8C8" stroke-width="1" stroke-dasharray="1 1"/>
<path d="M203.5 748 L213 758.5 M213 748 L203.5 758.5" fill="none" stroke="#E8F4E8" stroke-width="2.4"/>
<circle cx="230" cy="752.3" r="7.6" fill="#F4F4F4"/>
<path d="M230 752.3 L230 744.7 A7.6 7.6 0 0 1 237 755.5 Z" fill="#F08C1C"/>
<path d="M230 752.3 L237 755.5 A7.6 7.6 0 0 1 223.4 756 Z" fill="#58B038"/>
<path d="M230 752.3 L223.4 756 A7.6 7.6 0 0 1 230 744.7 Z" fill="#2C6CD8"/>
<circle cx="230" cy="752.3" r="4" fill="#F4F4F8"/>
<path d="M228.6 749.8 L232.6 752.3 L228.6 754.8 Z" fill="#181818"/>
<circle cx="254.3" cy="752.5" r="7.7" fill="#F8E8E8"/>
<circle cx="254.3" cy="752.5" r="6.2" fill="url(#gNero)"/>
<rect x="269.5" y="745.5" width="15" height="13" fill="#0808E8" stroke="#40D8F0" stroke-width="1.2"/>
<rect x="276.6" y="746" width="1.2" height="12.5" fill="#40D8F0"/>
<rect x="271.5" y="748" width="4" height="1" fill="#70D8FC"/>
<rect x="279.5" y="748" width="4" height="1" fill="#70D8FC"/>
<rect x="271.5" y="750.5" width="4" height="1" fill="#70D8FC"/>
<rect x="279.5" y="750.5" width="4" height="1" fill="#70D8FC"/>
<rect x="271.5" y="753" width="4" height="1" fill="#70D8FC"/>
<rect x="279.5" y="753" width="4" height="1" fill="#70D8FC"/>
<rect x="271.5" y="755.5" width="4" height="1" fill="#70D8FC"/>
<rect x="279.5" y="755.5" width="4" height="1" fill="#70D8FC"/>
<rect x="269" y="759" width="16" height="1" fill="#0A0A40"/>
<rect x="346" y="741" width="90" height="24.5" fill="#3C80F0" rx="3"/>
<rect x="347" y="741.5" width="88" height="1.5" fill="#6CA4FC" rx="1"/>
<rect x="346" y="763.5" width="90" height="2" fill="#2C60D0" rx="1"/>
<rect x="438" y="741" width="90" height="24.5" fill="#3C80F0" rx="3"/>
<rect x="439" y="741.5" width="88" height="1.5" fill="#6CA4FC" rx="1"/>
<rect x="438" y="763.5" width="90" height="2" fill="#2C60D0" rx="1"/>
<rect x="529.5" y="741" width="91.0" height="24.5" fill="#1E52B8" rx="3"/>
<rect x="529.5" y="741" width="91.0" height="2" fill="#153C90" rx="1"/>
<rect x="529.5" y="741" width="1.5" height="24" fill="#153C90"/>
<rect x="622" y="741" width="90" height="24.5" fill="#3C80F0" rx="3"/>
<rect x="623" y="741.5" width="88" height="1.5" fill="#6CA4FC" rx="1"/>
<rect x="622" y="763.5" width="90" height="2" fill="#2C60D0" rx="1"/>
<rect x="713.5" y="741" width="90.5" height="24.5" fill="#3C80F0" rx="3"/>
<rect x="714.5" y="741.5" width="88.5" height="1.5" fill="#6CA4FC" rx="1"/>
<rect x="713.5" y="763.5" width="90.5" height="2" fill="#2C60D0" rx="1"/>
<rect x="356" y="748" width="12" height="10" fill="#E8F0FC" stroke="#5878B8" stroke-width="1"/>
<path d="M356 748 l6 5 l6 -5" fill="none" stroke="#5878B8"/>
<path d="M361 746 l5 -1 l2 5 l-4 3 z" fill="#3C78E0"/>
<rect x="364" y="752" width="5" height="5" fill="#E8ECF8" stroke="#6C84C0" stroke-width="0.8"/>
<text x="374.5" y="757.3" font-size="11" fill="#fff" textLength="41.5" lengthAdjust="spacingAndGlyphs">Входя...</text>
<path d="M450.5 745.5 h9 l3.5 3.5 v11.5 h-12.5 z" fill="#F8F8F8" stroke="#707070"/>
<text x="447" y="758.5" font-size="14" fill="#1C64D8" font-weight="bold" font-style="italic">e</text>
<text x="467" y="757.3" font-size="11" fill="#fff" textLength="43" lengthAdjust="spacingAndGlyphs">ЖЗЛ п...</text>
<rect x="540" y="748.5" width="15.5" height="10.5" fill="#0000C8"/>
<text x="541" y="757.8" font-size="10.5" fill="#fff" font-weight="bold" textLength="13.5" lengthAdjust="spacingAndGlyphs">isis</text>
<text x="560" y="757.3" font-size="11" fill="#fff" textLength="45" lengthAdjust="spacingAndGlyphs">M8_8P...</text>
<rect x="632.5" y="745.5" width="14" height="14" fill="#F4F4F0" stroke="#A8A8A0" stroke-width="1" rx="2"/>
<path d="M635 757 q2 -8 9 -10 q-1 7 -9 10 z" fill="#E8A020"/>
<path d="M636 757 q1 -5 6 -8" fill="none" stroke="#3C9C3C" stroke-width="1.6"/>
<text x="651" y="757.3" font-size="11" fill="#fff" textLength="44.5" lengthAdjust="spacingAndGlyphs">Adobe ...</text>
<rect x="723" y="746.5" width="16" height="12.5" fill="#D81818"/>
<text x="724" y="756.6" font-size="10.6" fill="#fff" font-weight="bold" textLength="14" lengthAdjust="spacingAndGlyphs">ARES</text>
<rect x="724.3" y="757.4" width="13.4" height="0.9" fill="#fff"/>
<text x="743" y="757.3" font-size="11" fill="#fff" textLength="43.5" lengthAdjust="spacingAndGlyphs">AIO_M...</text>
<text x="815.5" y="757.3" font-size="11" fill="#fff" textLength="13" lengthAdjust="spacingAndGlyphs">EN</text>
<rect x="842" y="738" width="182" height="30" fill="url(#gTray)"/>
<rect x="841" y="738" width="1.4" height="30" fill="#0C50A8"/>
<circle cx="841.7" cy="753" r="9" fill="url(#gChev)" stroke="#B8DCFC" stroke-width="1.2"/>
<path d="M843.5 748.8 L839.2 753 L843.5 757.2" fill="none" stroke="#fff" stroke-width="2.2"/>
<path d="M855 746 l3 0.5 l6 8 l2 5.5 l-5.5 -2 l-6 -8 z" fill="#606468" stroke="#202428" stroke-width="0.8"/>
<path d="M860.5 757 l1 3.5 l3 -1.5" fill="none" stroke="#E8F0FC" stroke-width="1.2"/>
<rect x="871" y="747.5" width="8" height="6.5" fill="#5868A8" stroke="#D8E0F0" stroke-width="1"/>
<rect x="872" y="755" width="7" height="2" fill="#C8CCD8"/>
<path d="M881 746 q3 3.5 0 7 M883.2 744.5 q4.2 5 0 10" fill="none" stroke="#E8ECF4" stroke-width="1.1"/>
<path d="M878 754 l7 6 m0 -6 l-7 6" fill="none" stroke="#E02020" stroke-width="2"/>
<rect x="889" y="749.5" width="8" height="6.5" fill="#5868A8" stroke="#D8E0F0" stroke-width="1"/>
<rect x="894" y="745.5" width="8" height="6.5" fill="#4858A0" stroke="#D8E0F0" stroke-width="1"/>
<rect x="889.5" y="757" width="8" height="1.6" fill="#B8C0D8"/>
<path d="M897 753.5 l7 6.5 m0 -6.5 l-7 6.5" fill="none" stroke="#E02020" stroke-width="2"/>
<circle cx="914" cy="751.5" r="6.6" fill="#8C9094" stroke="#484C50" stroke-width="1"/>
<circle cx="913.2" cy="750.8" r="3.2" fill="#3C4044"/>
<path d="M911 761 l9 -7" fill="none" stroke="#6C8CE0" stroke-width="1.3"/>
<circle cx="930" cy="748.8" r="3" fill="#4CA44C"/>
<path d="M925.5 759 q0 -7 4.5 -7 q4.5 0 4.5 7 z" fill="#4CA44C"/>
<circle cx="936" cy="747.5" r="2.6" fill="#4C7CD0"/>
<path d="M933 755 q0 -5 3 -5 q3.6 0 3.6 5 z" fill="#4C7CD0"/>
<circle cx="936.5" cy="757" r="3.6" fill="#E02820"/>
<path d="M935 755.5 l3 3 m0 -3 l-3 3" fill="none" stroke="#fff" stroke-width="1.1"/>
<rect x="943" y="745.5" width="14" height="12" fill="#E02020" rx="4"/>
<path d="M945 753 q5 -7 10 -4 q-4 7 -10 4 z" fill="#F8E0E0"/>
<path d="M943.5 757 q6 4 13 -1" fill="none" stroke="#2038C0" stroke-width="1.8"/>
<path d="M962 746.5 q3 0.5 5.7 -1.5 q2.7 2 5.7 1.5 q0.6 9 -5.7 13.5 q-6.3 -4.5 -5.7 -13.5 z" fill="#D82828" stroke="#F0F0F0" stroke-width="1.1"/>
<path d="M965.5 750.5 l4.4 4.4 m0 -4.4 l-4.4 4.4" fill="none" stroke="#fff" stroke-width="1.4"/>
<text x="984" y="757.3" font-size="11" fill="#fff" textLength="27" lengthAdjust="spacingAndGlyphs">10:41</text>
</svg>
</body></html>
